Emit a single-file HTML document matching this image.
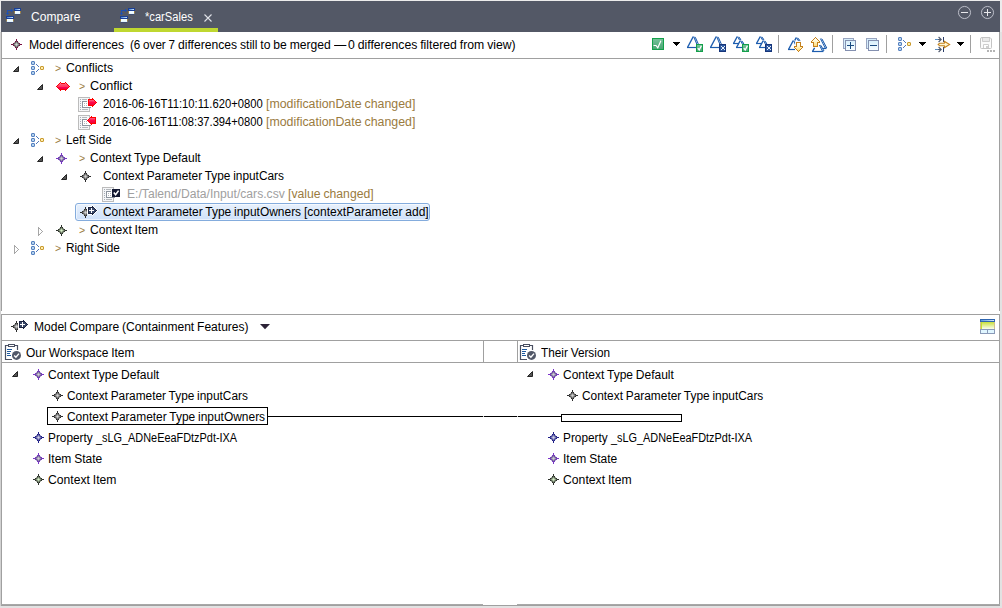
<!DOCTYPE html>
<html><head><meta charset="utf-8">
<style>
*{box-sizing:border-box;margin:0;padding:0}
html,body{width:1002px;height:608px;overflow:hidden;background:#fff}
body{font-family:"Liberation Sans",sans-serif;font-size:12px;color:#000;position:relative}
.a{position:absolute}
.t{position:absolute;white-space:nowrap;line-height:14px;height:14px;font-size:12px;transform-origin:0 0;word-spacing:-0.5px}
svg{position:absolute;overflow:visible}
</style></head><body>
<!-- outer light edge -->
<div class="a" style="left:0;top:0;width:1002px;height:608px;background:#ececec"></div>
<div class="a" style="left:0;top:32px;width:1px;height:576px;background:#d2d2d2"></div>
<div class="a" style="left:1px;top:1px;width:999px;height:605px;background:#fff"></div>
<div class="a" style="left:1000px;top:32px;width:2px;height:576px;background:#e2e2e2"></div>
<div class="a" style="left:0;top:606px;width:1002px;height:2px;background:#e2e2e2"></div>
<!-- tab bar -->
<div class="a" style="left:1px;top:1px;width:999px;height:31px;background:#535866"></div>
<div class="a" style="left:114px;top:28px;width:104px;height:4px;background:#bfd730"></div>
<!-- upper pane border -->
<div class="a" style="left:1px;top:32px;width:1px;height:279px;background:#a0a0a0"></div>
<div class="a" style="left:999px;top:32px;width:1px;height:279px;background:#a0a0a0"></div>
<div class="a" style="left:1px;top:58px;width:999px;height:1px;background:#a0a0a0"></div>
<!-- lower pane border -->
<div class="a" style="left:1px;top:314px;width:1px;height:292px;background:#a0a0a0"></div>
<div class="a" style="left:999px;top:314px;width:1px;height:292px;background:#a0a0a0"></div>
<div class="a" style="left:1px;top:314px;width:999px;height:1px;background:#a0a0a0"></div>
<div class="a" style="left:1px;top:340px;width:999px;height:1px;background:#a0a0a0"></div>
<div class="a" style="left:1px;top:362px;width:999px;height:1px;background:#a0a0a0"></div>
<div class="a" style="left:1px;top:604px;width:999px;height:1px;background:#a8a8a8"></div>
<div class="a" style="left:483px;top:604px;width:34px;height:1px;background:#fff"></div>
<div class="a" style="left:1px;top:605px;width:999px;height:1px;background:#a0a0a0"></div>
<div class="a" style="left:483px;top:340px;width:1px;height:23px;background:#a0a0a0"></div>
<div class="a" style="left:517px;top:340px;width:1px;height:23px;background:#a0a0a0"></div>
<!-- selection -->
<div class="a" style="left:75px;top:203px;width:355px;height:18px;border:1px solid #84acdd;border-radius:3px;background:linear-gradient(#e8f1fc,#cfe1fa);box-shadow:inset 0 0 0 1px rgba(255,255,255,.55)"></div>
<!-- diff boxes + connector -->
<div class="a" style="left:47px;top:407px;width:221px;height:18px;border:1px solid #000"></div>
<div class="a" style="left:268px;top:416px;width:293px;height:1px;background:#000"></div>
<div class="a" style="left:483px;top:416px;width:1px;height:1px;background:#d0d0d0"></div>
<div class="a" style="left:517px;top:416px;width:1px;height:1px;background:#d0d0d0"></div>
<div class="a" style="left:561px;top:414px;width:121px;height:8px;border:1px solid #000"></div>
<div class="t" id="tab1" style="left:31.00px;top:10.2px;color:#fff;transform:scaleX(1.0035)">Compare</div>
<div class="t" id="tab2" style="left:144.86px;top:10.4px;color:#fff;transform:scaleX(0.9290)">*carSales</div>
<div class="t" id="ta" style="left:28.64px;top:38.2px;color:#000;transform:scaleX(1.0124)">Model differences</div>
<div class="t" id="tb1" style="left:130.02px;top:38.2px;color:#000;transform:scaleX(0.9694)">(6 over 7</div>
<div class="t" id="tb2" style="left:178.29px;top:38.2px;color:#000;transform:scaleX(1.0109)">differences still to be merged</div>
<div class="t" id="tb3" style="left:333.70px;top:38.2px;color:#000;transform:scaleX(1.0250)">—</div>
<div class="t" id="tb4" style="left:348.24px;top:38.2px;color:#000;transform:scaleX(1.0192)">0 differences filtered from view)</div>
<div class="t" id="r1a" style="left:55.33px;top:61.9px;color:#9a7b3e;font-size:10px;transform:scaleX(1.0505)">&gt;</div>
<div class="t" id="r1b" style="left:65.99px;top:61px;color:#000;transform:scaleX(1.0219)">Conflicts</div>
<div class="t" id="r2a" style="left:79.33px;top:79.9px;color:#9a7b3e;font-size:10px;transform:scaleX(1.0505)">&gt;</div>
<div class="t" id="r2b" style="left:89.67px;top:79px;color:#000;transform:scaleX(1.0552)">Conflict</div>
<div class="t" id="r3a" style="left:102.64px;top:97px;color:#000;transform:scaleX(0.9353)">2016-06-16T11:10:11.620+0800</div>
<div class="t" id="r3b" style="left:265.82px;top:97px;color:#9a7b3e;transform:scaleX(1.0304)">[modificationDate changed]</div>
<div class="t" id="r4a" style="left:102.64px;top:115px;color:#000;transform:scaleX(0.9304)">2016-06-16T11:08:37.394+0800</div>
<div class="t" id="r4b" style="left:265.82px;top:115px;color:#9a7b3e;transform:scaleX(1.0304)">[modificationDate changed]</div>
<div class="t" id="r5a" style="left:55.33px;top:133.9px;color:#9a7b3e;font-size:10px;transform:scaleX(1.0505)">&gt;</div>
<div class="t" id="r5b" style="left:65.57px;top:133px;color:#000;transform:scaleX(0.9759)">Left Side</div>
<div class="t" id="r6a" style="left:79.33px;top:151.9px;color:#9a7b3e;font-size:10px;transform:scaleX(1.0505)">&gt;</div>
<div class="t" id="r6b" style="left:89.80px;top:151px;color:#000;transform:scaleX(0.9984)">Context Type Default</div>
<div class="t" id="r7" style="left:102.81px;top:169px;color:#000;transform:scaleX(0.9887)">Context Parameter Type inputCars</div>
<div class="t" id="r8a" style="left:126.64px;top:187px;color:#a0a0a0;transform:scaleX(1.0108)">E:/Talend/Data/Input/cars.csv</div>
<div class="t" id="r8b" style="left:287.64px;top:187px;color:#9a7b3e;transform:scaleX(1.0164)">[value changed]</div>
<div class="t" id="r9a" style="left:102.80px;top:205px;color:#000;transform:scaleX(0.9952)">Context Parameter Type inputOwners</div>
<div class="t" id="r9b" style="left:303.65px;top:205px;color:#000;transform:scaleX(1.0037)">[contextParameter add]</div>
<div class="t" id="r10a" style="left:79.33px;top:223.9px;color:#9a7b3e;font-size:10px;transform:scaleX(1.0505)">&gt;</div>
<div class="t" id="r10b" style="left:89.79px;top:223px;color:#000;transform:scaleX(1.0093)">Context Item</div>
<div class="t" id="r11a" style="left:55.33px;top:241.9px;color:#9a7b3e;font-size:10px;transform:scaleX(1.0505)">&gt;</div>
<div class="t" id="r11b" style="left:65.57px;top:241px;color:#000;transform:scaleX(0.9814)">Right Side</div>
<div class="t" id="mc" style="left:33.65px;top:320px;color:#000;transform:scaleX(1.0029)">Model Compare (Containment Features)</div>
<div class="t" id="ow" style="left:25.85px;top:345.7px;color:#000;transform:scaleX(0.9971)">Our Workspace Item</div>
<div class="t" id="tv" style="left:541.45px;top:345.7px;color:#000;transform:scaleX(0.9830)">Their Version</div>
<div class="t" id="l1" style="left:47.70px;top:368px;color:#000;transform:scaleX(1.0029)">Context Type Default</div>
<div class="t" id="l2" style="left:67.11px;top:389px;color:#000;transform:scaleX(0.9882)">Context Parameter Type inputCars</div>
<div class="t" id="l3" style="left:67.10px;top:410px;color:#000;transform:scaleX(0.9952)">Context Parameter Type inputOwners</div>
<div class="t" id="l4a" style="left:47.77px;top:431px;color:#000;transform:scaleX(0.9842)">Property</div>
<div class="t" id="l4b" style="left:96.28px;top:431px;color:#000;transform:scaleX(0.9081)">_sLG_ADNeEeaFDtzPdt-IXA</div>
<div class="t" id="l5" style="left:47.50px;top:452px;color:#000;transform:scaleX(1.0006)">Item State</div>
<div class="t" id="l6" style="left:47.69px;top:473px;color:#000;transform:scaleX(1.0139)">Context Item</div>
<div class="t" id="q1" style="left:562.70px;top:368px;color:#000;transform:scaleX(1.0002)">Context Type Default</div>
<div class="t" id="q2" style="left:581.71px;top:389px;color:#000;transform:scaleX(0.9904)">Context Parameter Type inputCars</div>
<div class="t" id="q4a" style="left:562.77px;top:431px;color:#000;transform:scaleX(0.9842)">Property</div>
<div class="t" id="q4b" style="left:611.28px;top:431px;color:#000;transform:scaleX(0.9081)">_sLG_ADNeEeaFDtzPdt-IXA</div>
<div class="t" id="q5" style="left:562.50px;top:452px;color:#000;transform:scaleX(1.0006)">Item State</div>
<div class="t" id="q6" style="left:562.69px;top:473px;color:#000;transform:scaleX(1.0169)">Context Item</div>
<svg width="1002" height="608" style="left:0;top:0" shape-rendering="crispEdges"><defs><linearGradient id="g1" x1="0" y1="0" x2="0" y2="1"><stop offset="0" stop-color="#5b9be0"/><stop offset="1" stop-color="#5b9be0"/></linearGradient><linearGradient id="g2"><stop offset="0" stop-color="#3f7fd8"/><stop offset="1" stop-color="#cfe6fa"/></linearGradient><linearGradient id="g3" x1="0" y1="0" x2="0" y2="1"><stop offset="0" stop-color="#5b9be0"/><stop offset="1" stop-color="#5b9be0"/></linearGradient><linearGradient id="g4"><stop offset="0" stop-color="#3f7fd8"/><stop offset="1" stop-color="#cfe6fa"/></linearGradient><linearGradient id="g5" x1="0" y1="0" x2="0" y2="1"><stop offset="0" stop-color="#5b9be0"/><stop offset="1" stop-color="#5b9be0"/></linearGradient><linearGradient id="g6"><stop offset="0" stop-color="#3f7fd8"/><stop offset="1" stop-color="#cfe6fa"/></linearGradient><linearGradient id="g7" x1="0" y1="0" x2="0" y2="1"><stop offset="0" stop-color="#5b9be0"/><stop offset="1" stop-color="#5b9be0"/></linearGradient><linearGradient id="g8"><stop offset="0" stop-color="#3f7fd8"/><stop offset="1" stop-color="#cfe6fa"/></linearGradient><linearGradient id="g9" x1="0" y1="0" x2="0" y2="1"><stop offset="0" stop-color="#ff90a0"/><stop offset="0.5" stop-color="#ff0848"/><stop offset="1" stop-color="#e00030"/></linearGradient><linearGradient id="g10" x1="0" y1="0" x2="0" y2="1"><stop offset="0" stop-color="#ff90a0"/><stop offset="0.5" stop-color="#ff0848"/><stop offset="1" stop-color="#e00030"/></linearGradient><linearGradient id="g11"><stop offset="0" stop-color="#5a98dc"/><stop offset="1" stop-color="#d8e8f8"/></linearGradient><linearGradient id="g12" x1="0" y1="0" x2="0" y2="1"><stop offset="0" stop-color="#c8e03c"/><stop offset="1" stop-color="#fbfdf0"/></linearGradient><linearGradient id="g13" x1="0" y1="0" x2="0" y2="1"><stop offset="0" stop-color="#74c098"/><stop offset="1" stop-color="#4aa674"/></linearGradient><linearGradient id="g14" x1="0" y1="0" x2="0" y2="1"><stop offset="0" stop-color="#74c098"/><stop offset="1" stop-color="#4aa674"/></linearGradient><linearGradient id="g15" x1="0" y1="0" x2="0" y2="1"><stop offset="0" stop-color="#74c098"/><stop offset="1" stop-color="#4aa674"/></linearGradient><linearGradient id="g16" x1="0" y1="0" x2="0" y2="1"><stop offset="0" stop-color="#d8f0fc"/><stop offset="1" stop-color="#f8fcff"/></linearGradient><linearGradient id="g17" x1="0" y1="0" x2="0" y2="1"><stop offset="0" stop-color="#d8f0fc"/><stop offset="1" stop-color="#f8fcff"/></linearGradient></defs>
<rect x="14" y="8" width="7" height="3" fill="#1c3f94"/>
<rect x="15" y="9" width="5" height="1" fill="url(#g1)"/>
<rect x="15" y="9" width="5" height="1" fill="url(#g2)"/>
<rect x="14" y="11" width="7" height="3" fill="#b08a3a" opacity="0.8"/>
<rect x="15" y="11" width="5" height="3" fill="#f0fcff"/>
<rect x="14" y="13" width="7" height="1" fill="#6a7a9a" opacity="0.6"/>
<rect x="15" y="13" width="5" height="1" fill="#e6f6ff"/>
<rect x="15" y="14" width="5" height="1" fill="#3a4a78" opacity="0.7"/>
<rect x="6" y="16" width="8" height="3" fill="#1c3f94"/>
<rect x="7" y="17" width="6" height="1" fill="url(#g3)"/>
<rect x="7" y="17" width="6" height="1" fill="url(#g4)"/>
<rect x="6" y="19" width="8" height="3" fill="#b08a3a" opacity="0.8"/>
<rect x="7" y="19" width="6" height="3" fill="#f0fcff"/>
<rect x="6" y="21" width="8" height="1" fill="#6a7a9a" opacity="0.6"/>
<rect x="7" y="21" width="6" height="1" fill="#e6f6ff"/>
<rect x="7" y="22" width="6" height="1" fill="#3a4a78" opacity="0.7"/>
<rect x="7" y="10" width="5" height="1" fill="#2050b0"/>
<rect x="7" y="10" width="1" height="4" fill="#2050b0"/>
<rect x="11" y="9" width="1" height="3" fill="#2050b0"/>
<rect x="12" y="10" width="1" height="1" fill="#2050b0"/>
<rect x="6" y="13" width="3" height="1" fill="#2050b0"/>
<rect x="7" y="14" width="1" height="1" fill="#2050b0"/>
<rect x="128" y="8" width="7" height="3" fill="#1c3f94"/>
<rect x="129" y="9" width="5" height="1" fill="url(#g5)"/>
<rect x="129" y="9" width="5" height="1" fill="url(#g6)"/>
<rect x="128" y="11" width="7" height="3" fill="#b08a3a" opacity="0.8"/>
<rect x="129" y="11" width="5" height="3" fill="#f0fcff"/>
<rect x="128" y="13" width="7" height="1" fill="#6a7a9a" opacity="0.6"/>
<rect x="129" y="13" width="5" height="1" fill="#e6f6ff"/>
<rect x="129" y="14" width="5" height="1" fill="#3a4a78" opacity="0.7"/>
<rect x="120" y="16" width="8" height="3" fill="#1c3f94"/>
<rect x="121" y="17" width="6" height="1" fill="url(#g7)"/>
<rect x="121" y="17" width="6" height="1" fill="url(#g8)"/>
<rect x="120" y="19" width="8" height="3" fill="#b08a3a" opacity="0.8"/>
<rect x="121" y="19" width="6" height="3" fill="#f0fcff"/>
<rect x="120" y="21" width="8" height="1" fill="#6a7a9a" opacity="0.6"/>
<rect x="121" y="21" width="6" height="1" fill="#e6f6ff"/>
<rect x="121" y="22" width="6" height="1" fill="#3a4a78" opacity="0.7"/>
<rect x="121" y="10" width="5" height="1" fill="#2050b0"/>
<rect x="121" y="10" width="1" height="4" fill="#2050b0"/>
<rect x="125" y="9" width="1" height="3" fill="#2050b0"/>
<rect x="126" y="10" width="1" height="1" fill="#2050b0"/>
<rect x="120" y="13" width="3" height="1" fill="#2050b0"/>
<rect x="121" y="14" width="1" height="1" fill="#2050b0"/>
<path shape-rendering="geometricPrecision" d="M204.5 14.5 L211.5 21.5 M211.5 14.5 L204.5 21.5" stroke="#e0e2e8" stroke-width="1.1" fill="none"/>
<circle shape-rendering="geometricPrecision" cx="964.5" cy="12.5" r="6.05" fill="none" stroke="#c0c2cc" stroke-width="0.95"/><rect x="961" y="12" width="7" height="1.3" fill="#e8e8ec"/>
<circle shape-rendering="geometricPrecision" cx="987.5" cy="12.5" r="6.05" fill="none" stroke="#c0c2cc" stroke-width="0.95"/><rect x="984" y="12" width="7" height="1.3" fill="#e8e8ec"/><rect x="987" y="9" width="1.3" height="7" fill="#e8e8ec"/>
<rect x="16" y="39" width="1" height="1" fill="#780c40"/>
<rect x="16" y="40" width="1" height="1" fill="#780c40"/>
<rect x="15" y="41" width="1" height="1" fill="#780c40"/>
<rect x="16" y="41" width="1" height="1" fill="#5c5c5c"/>
<rect x="17" y="41" width="1" height="1" fill="#780c40"/>
<rect x="14" y="42" width="1" height="1" fill="#c090a8"/>
<rect x="15" y="42" width="1" height="1" fill="#5c5c5c"/>
<rect x="16" y="42" width="1" height="1" fill="#909090"/>
<rect x="17" y="42" width="1" height="1" fill="#5c5c5c"/>
<rect x="18" y="42" width="1" height="1" fill="#c090a8"/>
<rect x="13" y="43" width="1" height="1" fill="#780c40"/>
<rect x="14" y="43" width="1" height="1" fill="#5c5c5c"/>
<rect x="15" y="43" width="1" height="1" fill="#909090"/>
<rect x="16" y="43" width="1" height="1" fill="#bcbcbc"/>
<rect x="17" y="43" width="1" height="1" fill="#909090"/>
<rect x="18" y="43" width="1" height="1" fill="#5c5c5c"/>
<rect x="19" y="43" width="1" height="1" fill="#780c40"/>
<rect x="11" y="44" width="2" height="1" fill="#780c40"/>
<rect x="13" y="44" width="1" height="1" fill="#5c5c5c"/>
<rect x="14" y="44" width="1" height="1" fill="#909090"/>
<rect x="15" y="44" width="1" height="1" fill="#bcbcbc"/>
<rect x="16" y="44" width="1" height="1" fill="#dadada"/>
<rect x="17" y="44" width="1" height="1" fill="#bcbcbc"/>
<rect x="18" y="44" width="1" height="1" fill="#909090"/>
<rect x="19" y="44" width="1" height="1" fill="#5c5c5c"/>
<rect x="20" y="44" width="2" height="1" fill="#780c40"/>
<rect x="13" y="45" width="1" height="1" fill="#780c40"/>
<rect x="14" y="45" width="1" height="1" fill="#5c5c5c"/>
<rect x="15" y="45" width="1" height="1" fill="#909090"/>
<rect x="16" y="45" width="1" height="1" fill="#bcbcbc"/>
<rect x="17" y="45" width="1" height="1" fill="#909090"/>
<rect x="18" y="45" width="1" height="1" fill="#5c5c5c"/>
<rect x="19" y="45" width="1" height="1" fill="#780c40"/>
<rect x="14" y="46" width="1" height="1" fill="#c090a8"/>
<rect x="15" y="46" width="1" height="1" fill="#5c5c5c"/>
<rect x="16" y="46" width="1" height="1" fill="#909090"/>
<rect x="17" y="46" width="1" height="1" fill="#5c5c5c"/>
<rect x="18" y="46" width="1" height="1" fill="#c090a8"/>
<rect x="15" y="47" width="1" height="1" fill="#780c40"/>
<rect x="16" y="47" width="1" height="1" fill="#5c5c5c"/>
<rect x="17" y="47" width="1" height="1" fill="#780c40"/>
<rect x="16" y="48" width="1" height="1" fill="#780c40"/>
<rect x="16" y="49" width="1" height="1" fill="#780c40"/>
<polygon shape-rendering="geometricPrecision" points="18.5,66.5 18.5,71.5 13.5,71.5" fill="#565656" stroke="#242424" stroke-width="1"/>
<rect shape-rendering="geometricPrecision" x="31.5" y="61.5" width="3" height="3" rx="0.5" fill="#b4d2ec" stroke="#5580c0" stroke-width="1"/>
<rect shape-rendering="geometricPrecision" x="31.5" y="66.5" width="3" height="3" rx="0.5" fill="#b4d2ec" stroke="#5580c0" stroke-width="1"/>
<rect shape-rendering="geometricPrecision" x="31.5" y="71.5" width="3" height="3" rx="0.5" fill="#b4d2ec" stroke="#5580c0" stroke-width="1"/>
<rect shape-rendering="geometricPrecision" x="40.5" y="66.5" width="3" height="3" rx="0.5" fill="#ffeeb0" stroke="#c99a2e" stroke-width="1"/>
<rect x="36" y="64" width="1" height="1" fill="#4f76b8"/>
<rect x="37" y="65" width="1" height="1" fill="#4f76b8"/>
<rect x="38" y="66" width="1" height="1" fill="#4f76b8"/>
<rect x="38" y="69" width="1" height="1" fill="#4f76b8"/>
<rect x="37" y="70" width="1" height="1" fill="#4f76b8"/>
<rect x="36" y="71" width="1" height="1" fill="#4f76b8"/>
<polygon shape-rendering="geometricPrecision" points="42.5,84.5 42.5,89.5 37.5,89.5" fill="#565656" stroke="#242424" stroke-width="1"/>
<rect x="60" y="82" width="1" height="1" fill="#f80008"/>
<rect x="65" y="82" width="1" height="1" fill="#f80008"/>
<rect x="59" y="83" width="1" height="1" fill="#f80008"/>
<rect x="60" y="83" width="1" height="1" fill="#ff7088"/>
<rect x="61" y="83" width="4" height="1" fill="#f80008"/>
<rect x="65" y="83" width="1" height="1" fill="#ff7088"/>
<rect x="66" y="83" width="1" height="1" fill="#f80008"/>
<rect x="58" y="84" width="1" height="1" fill="#f80008"/>
<rect x="59" y="84" width="8" height="1" fill="#ff5672"/>
<rect x="67" y="84" width="1" height="1" fill="#f80008"/>
<rect x="57" y="85" width="1" height="1" fill="#f80008"/>
<rect x="58" y="85" width="10" height="1" fill="#ff4466"/>
<rect x="68" y="85" width="1" height="1" fill="#f80008"/>
<rect x="56" y="86" width="1" height="1" fill="#f80008"/>
<rect x="57" y="86" width="12" height="1" fill="#ff3a60"/>
<rect x="69" y="86" width="1" height="1" fill="#f80008"/>
<rect x="57" y="87" width="1" height="1" fill="#f80008"/>
<rect x="58" y="87" width="10" height="1" fill="#ff0050"/>
<rect x="68" y="87" width="1" height="1" fill="#f80008"/>
<rect x="58" y="88" width="1" height="1" fill="#f80008"/>
<rect x="59" y="88" width="8" height="1" fill="#f40044"/>
<rect x="67" y="88" width="1" height="1" fill="#f80008"/>
<rect x="59" y="89" width="8" height="1" fill="#f80008"/>
<rect x="60" y="90" width="1" height="1" fill="#f80008"/>
<rect x="65" y="90" width="1" height="1" fill="#f80008"/>
<rect x="78" y="97" width="12" height="15" fill="#bcbcbc"/>
<rect x="79" y="98" width="10" height="13" fill="#f5f6f8"/>
<rect x="80" y="99" width="1" height="1" fill="#a6acb4"/>
<rect x="80" y="101" width="1" height="1" fill="#a6acb4"/>
<rect x="80" y="103" width="1" height="1" fill="#a6acb4"/>
<rect x="80" y="105" width="1" height="1" fill="#a6acb4"/>
<rect x="80" y="107" width="1" height="1" fill="#a6acb4"/>
<rect x="80" y="109" width="1" height="1" fill="#a6acb4"/>
<rect x="82" y="99" width="5" height="1" fill="#b4b8bc"/>
<rect x="82" y="109" width="6" height="1" fill="#b4b8bc"/>
<rect x="82" y="101" width="5" height="1" fill="#8c949e"/>
<rect x="82" y="101" width="1" height="7" fill="#8c949e"/>
<rect x="82" y="107" width="9" height="1" fill="#8c949e"/>
<rect x="83" y="102" width="7" height="5" fill="#fff"/>
<rect x="84" y="103" width="1" height="1" fill="#b0b4ba"/>
<rect x="84" y="105" width="1" height="1" fill="#b0b4ba"/>
<rect x="86" y="103" width="1" height="1" fill="#b0b4ba"/>
<rect x="86" y="105" width="1" height="1" fill="#b0b4ba"/>
<polygon points="88.5,99.5 92.5,99.5 92.5,98.5 96.5,102.5 92.5,106.5 92.5,105.5 88.5,105.5" fill="url(#g9)" stroke="#ff0000" stroke-width="1"/>
<rect x="78" y="115" width="12" height="15" fill="#bcbcbc"/>
<rect x="79" y="116" width="10" height="13" fill="#f5f6f8"/>
<rect x="80" y="117" width="1" height="1" fill="#a6acb4"/>
<rect x="80" y="119" width="1" height="1" fill="#a6acb4"/>
<rect x="80" y="121" width="1" height="1" fill="#a6acb4"/>
<rect x="80" y="123" width="1" height="1" fill="#a6acb4"/>
<rect x="80" y="125" width="1" height="1" fill="#a6acb4"/>
<rect x="80" y="127" width="1" height="1" fill="#a6acb4"/>
<rect x="82" y="117" width="5" height="1" fill="#b4b8bc"/>
<rect x="82" y="127" width="6" height="1" fill="#b4b8bc"/>
<rect x="82" y="119" width="5" height="1" fill="#8c949e"/>
<rect x="82" y="119" width="1" height="7" fill="#8c949e"/>
<rect x="82" y="125" width="9" height="1" fill="#8c949e"/>
<rect x="83" y="120" width="7" height="5" fill="#fff"/>
<rect x="84" y="121" width="1" height="1" fill="#b0b4ba"/>
<rect x="84" y="123" width="1" height="1" fill="#b0b4ba"/>
<rect x="86" y="121" width="1" height="1" fill="#b0b4ba"/>
<rect x="86" y="123" width="1" height="1" fill="#b0b4ba"/>
<polygon points="95.5,117.5 91.5,117.5 91.5,116.5 87.5,120.5 91.5,124.5 91.5,123.5 95.5,123.5" fill="url(#g10)" stroke="#ff0000" stroke-width="1"/>
<polygon shape-rendering="geometricPrecision" points="18.5,138.5 18.5,143.5 13.5,143.5" fill="#565656" stroke="#242424" stroke-width="1"/>
<rect shape-rendering="geometricPrecision" x="31.5" y="133.5" width="3" height="3" rx="0.5" fill="#b4d2ec" stroke="#5580c0" stroke-width="1"/>
<rect shape-rendering="geometricPrecision" x="31.5" y="138.5" width="3" height="3" rx="0.5" fill="#b4d2ec" stroke="#5580c0" stroke-width="1"/>
<rect shape-rendering="geometricPrecision" x="31.5" y="143.5" width="3" height="3" rx="0.5" fill="#b4d2ec" stroke="#5580c0" stroke-width="1"/>
<rect shape-rendering="geometricPrecision" x="40.5" y="138.5" width="3" height="3" rx="0.5" fill="#ffeeb0" stroke="#c99a2e" stroke-width="1"/>
<rect x="36" y="136" width="1" height="1" fill="#4f76b8"/>
<rect x="37" y="137" width="1" height="1" fill="#4f76b8"/>
<rect x="38" y="138" width="1" height="1" fill="#4f76b8"/>
<rect x="38" y="141" width="1" height="1" fill="#4f76b8"/>
<rect x="37" y="142" width="1" height="1" fill="#4f76b8"/>
<rect x="36" y="143" width="1" height="1" fill="#4f76b8"/>
<polygon shape-rendering="geometricPrecision" points="42.5,156.5 42.5,161.5 37.5,161.5" fill="#565656" stroke="#242424" stroke-width="1"/>
<rect x="61" y="153" width="1" height="1" fill="#7a30cc"/>
<rect x="61" y="154" width="1" height="1" fill="#7a30cc"/>
<rect x="60" y="155" width="1" height="1" fill="#7a30cc"/>
<rect x="61" y="155" width="1" height="1" fill="#6c5898"/>
<rect x="62" y="155" width="1" height="1" fill="#7a30cc"/>
<rect x="59" y="156" width="1" height="1" fill="#b8a0dc"/>
<rect x="60" y="156" width="1" height="1" fill="#6c5898"/>
<rect x="61" y="156" width="1" height="1" fill="#9488ac"/>
<rect x="62" y="156" width="1" height="1" fill="#6c5898"/>
<rect x="63" y="156" width="1" height="1" fill="#b8a0dc"/>
<rect x="58" y="157" width="1" height="1" fill="#7a30cc"/>
<rect x="59" y="157" width="1" height="1" fill="#6c5898"/>
<rect x="60" y="157" width="1" height="1" fill="#9488ac"/>
<rect x="61" y="157" width="1" height="1" fill="#b8b4c4"/>
<rect x="62" y="157" width="1" height="1" fill="#9488ac"/>
<rect x="63" y="157" width="1" height="1" fill="#6c5898"/>
<rect x="64" y="157" width="1" height="1" fill="#7a30cc"/>
<rect x="56" y="158" width="2" height="1" fill="#7a30cc"/>
<rect x="58" y="158" width="1" height="1" fill="#6c5898"/>
<rect x="59" y="158" width="1" height="1" fill="#9488ac"/>
<rect x="60" y="158" width="1" height="1" fill="#b8b4c4"/>
<rect x="61" y="158" width="1" height="1" fill="#d2d2d6"/>
<rect x="62" y="158" width="1" height="1" fill="#b8b4c4"/>
<rect x="63" y="158" width="1" height="1" fill="#9488ac"/>
<rect x="64" y="158" width="1" height="1" fill="#6c5898"/>
<rect x="65" y="158" width="2" height="1" fill="#7a30cc"/>
<rect x="58" y="159" width="1" height="1" fill="#7a30cc"/>
<rect x="59" y="159" width="1" height="1" fill="#6c5898"/>
<rect x="60" y="159" width="1" height="1" fill="#9488ac"/>
<rect x="61" y="159" width="1" height="1" fill="#b8b4c4"/>
<rect x="62" y="159" width="1" height="1" fill="#9488ac"/>
<rect x="63" y="159" width="1" height="1" fill="#6c5898"/>
<rect x="64" y="159" width="1" height="1" fill="#7a30cc"/>
<rect x="59" y="160" width="1" height="1" fill="#b8a0dc"/>
<rect x="60" y="160" width="1" height="1" fill="#6c5898"/>
<rect x="61" y="160" width="1" height="1" fill="#9488ac"/>
<rect x="62" y="160" width="1" height="1" fill="#6c5898"/>
<rect x="63" y="160" width="1" height="1" fill="#b8a0dc"/>
<rect x="60" y="161" width="1" height="1" fill="#7a30cc"/>
<rect x="61" y="161" width="1" height="1" fill="#6c5898"/>
<rect x="62" y="161" width="1" height="1" fill="#7a30cc"/>
<rect x="61" y="162" width="1" height="1" fill="#7a30cc"/>
<rect x="61" y="163" width="1" height="1" fill="#7a30cc"/>
<polygon shape-rendering="geometricPrecision" points="66.5,174.5 66.5,179.5 61.5,179.5" fill="#565656" stroke="#242424" stroke-width="1"/>
<rect x="85" y="171" width="1" height="1" fill="#2c2c2c"/>
<rect x="85" y="172" width="1" height="1" fill="#2c2c2c"/>
<rect x="84" y="173" width="1" height="1" fill="#2c2c2c"/>
<rect x="85" y="173" width="1" height="1" fill="#5a5a5a"/>
<rect x="86" y="173" width="1" height="1" fill="#2c2c2c"/>
<rect x="83" y="174" width="1" height="1" fill="#a8a8a8"/>
<rect x="84" y="174" width="1" height="1" fill="#5a5a5a"/>
<rect x="85" y="174" width="1" height="1" fill="#8c8c8c"/>
<rect x="86" y="174" width="1" height="1" fill="#5a5a5a"/>
<rect x="87" y="174" width="1" height="1" fill="#a8a8a8"/>
<rect x="82" y="175" width="1" height="1" fill="#2c2c2c"/>
<rect x="83" y="175" width="1" height="1" fill="#5a5a5a"/>
<rect x="84" y="175" width="1" height="1" fill="#8c8c8c"/>
<rect x="85" y="175" width="1" height="1" fill="#b8b8b8"/>
<rect x="86" y="175" width="1" height="1" fill="#8c8c8c"/>
<rect x="87" y="175" width="1" height="1" fill="#5a5a5a"/>
<rect x="88" y="175" width="1" height="1" fill="#2c2c2c"/>
<rect x="80" y="176" width="2" height="1" fill="#2c2c2c"/>
<rect x="82" y="176" width="1" height="1" fill="#5a5a5a"/>
<rect x="83" y="176" width="1" height="1" fill="#8c8c8c"/>
<rect x="84" y="176" width="1" height="1" fill="#b8b8b8"/>
<rect x="85" y="176" width="1" height="1" fill="#d2d2d2"/>
<rect x="86" y="176" width="1" height="1" fill="#b8b8b8"/>
<rect x="87" y="176" width="1" height="1" fill="#8c8c8c"/>
<rect x="88" y="176" width="1" height="1" fill="#5a5a5a"/>
<rect x="89" y="176" width="2" height="1" fill="#2c2c2c"/>
<rect x="82" y="177" width="1" height="1" fill="#2c2c2c"/>
<rect x="83" y="177" width="1" height="1" fill="#5a5a5a"/>
<rect x="84" y="177" width="1" height="1" fill="#8c8c8c"/>
<rect x="85" y="177" width="1" height="1" fill="#b8b8b8"/>
<rect x="86" y="177" width="1" height="1" fill="#8c8c8c"/>
<rect x="87" y="177" width="1" height="1" fill="#5a5a5a"/>
<rect x="88" y="177" width="1" height="1" fill="#2c2c2c"/>
<rect x="83" y="178" width="1" height="1" fill="#a8a8a8"/>
<rect x="84" y="178" width="1" height="1" fill="#5a5a5a"/>
<rect x="85" y="178" width="1" height="1" fill="#8c8c8c"/>
<rect x="86" y="178" width="1" height="1" fill="#5a5a5a"/>
<rect x="87" y="178" width="1" height="1" fill="#a8a8a8"/>
<rect x="84" y="179" width="1" height="1" fill="#2c2c2c"/>
<rect x="85" y="179" width="1" height="1" fill="#5a5a5a"/>
<rect x="86" y="179" width="1" height="1" fill="#2c2c2c"/>
<rect x="85" y="180" width="1" height="1" fill="#2c2c2c"/>
<rect x="85" y="181" width="1" height="1" fill="#2c2c2c"/>
<rect x="102" y="187" width="12" height="15" fill="#bcbcbc"/>
<rect x="103" y="188" width="10" height="13" fill="#f5f6f8"/>
<rect x="104" y="189" width="1" height="1" fill="#a6acb4"/>
<rect x="104" y="191" width="1" height="1" fill="#a6acb4"/>
<rect x="104" y="193" width="1" height="1" fill="#a6acb4"/>
<rect x="104" y="195" width="1" height="1" fill="#a6acb4"/>
<rect x="104" y="197" width="1" height="1" fill="#a6acb4"/>
<rect x="104" y="199" width="1" height="1" fill="#a6acb4"/>
<rect x="106" y="189" width="5" height="1" fill="#b4b8bc"/>
<rect x="106" y="199" width="6" height="1" fill="#b4b8bc"/>
<rect x="106" y="191" width="5" height="1" fill="#8c949e"/>
<rect x="106" y="191" width="1" height="7" fill="#8c949e"/>
<rect x="106" y="197" width="9" height="1" fill="#8c949e"/>
<rect x="107" y="192" width="7" height="5" fill="#fff"/>
<rect x="108" y="193" width="1" height="1" fill="#b0b4ba"/>
<rect x="108" y="195" width="1" height="1" fill="#b0b4ba"/>
<rect x="110" y="193" width="1" height="1" fill="#b0b4ba"/>
<rect x="110" y="195" width="1" height="1" fill="#b0b4ba"/>
<rect x="112" y="189" width="8" height="8" fill="#141a33"/>
<path shape-rendering="geometricPrecision" d="M113.8 192.6 L115.6 194.8 L118.6 190.6" stroke="#fff" stroke-width="1.6" fill="none"/>
<rect x="85" y="207" width="1" height="1" fill="#2c2c2c"/>
<rect x="85" y="208" width="1" height="1" fill="#2c2c2c"/>
<rect x="84" y="209" width="1" height="1" fill="#2c2c2c"/>
<rect x="85" y="209" width="1" height="1" fill="#5a5a5a"/>
<rect x="86" y="209" width="1" height="1" fill="#2c2c2c"/>
<rect x="83" y="210" width="1" height="1" fill="#a8a8a8"/>
<rect x="84" y="210" width="1" height="1" fill="#5a5a5a"/>
<rect x="85" y="210" width="1" height="1" fill="#8c8c8c"/>
<rect x="86" y="210" width="1" height="1" fill="#5a5a5a"/>
<rect x="82" y="211" width="1" height="1" fill="#2c2c2c"/>
<rect x="83" y="211" width="1" height="1" fill="#5a5a5a"/>
<rect x="84" y="211" width="1" height="1" fill="#8c8c8c"/>
<rect x="85" y="211" width="1" height="1" fill="#b8b8b8"/>
<rect x="86" y="211" width="1" height="1" fill="#8c8c8c"/>
<rect x="80" y="212" width="2" height="1" fill="#2c2c2c"/>
<rect x="82" y="212" width="1" height="1" fill="#5a5a5a"/>
<rect x="83" y="212" width="1" height="1" fill="#8c8c8c"/>
<rect x="84" y="212" width="1" height="1" fill="#b8b8b8"/>
<rect x="85" y="212" width="1" height="1" fill="#d2d2d2"/>
<rect x="86" y="212" width="1" height="1" fill="#b8b8b8"/>
<rect x="82" y="213" width="1" height="1" fill="#2c2c2c"/>
<rect x="83" y="213" width="1" height="1" fill="#5a5a5a"/>
<rect x="84" y="213" width="1" height="1" fill="#8c8c8c"/>
<rect x="85" y="213" width="1" height="1" fill="#b8b8b8"/>
<rect x="86" y="213" width="1" height="1" fill="#8c8c8c"/>
<rect x="83" y="214" width="1" height="1" fill="#a8a8a8"/>
<rect x="84" y="214" width="1" height="1" fill="#5a5a5a"/>
<rect x="85" y="214" width="1" height="1" fill="#8c8c8c"/>
<rect x="86" y="214" width="1" height="1" fill="#5a5a5a"/>
<rect x="84" y="215" width="1" height="1" fill="#2c2c2c"/>
<rect x="85" y="215" width="1" height="1" fill="#5a5a5a"/>
<rect x="86" y="215" width="1" height="1" fill="#2c2c2c"/>
<rect x="85" y="216" width="1" height="1" fill="#2c2c2c"/>
<rect x="85" y="217" width="1" height="1" fill="#2c2c2c"/>
<polygon points="88.5,207.5 92.5,207.5 92.5,206.5 96.5,210.5 92.5,214.5 92.5,213.5 88.5,213.5" fill="#fff" stroke="#fff" stroke-width="2.4" stroke-linejoin="round"/>
<polygon points="88.5,207.5 92.5,207.5 92.5,206.5 96.5,210.5 92.5,214.5 92.5,213.5 88.5,213.5" fill="#3a4868" stroke="#1a2340" stroke-width="1"/>
<rect x="89" y="210" width="5" height="1" fill="#fff"/>
<rect x="91" y="208" width="1" height="5" fill="#fff"/>
<polygon points="38.5,227.5 42.5,231.5 38.5,235.5" fill="#fff" stroke="#a6a6a6" stroke-width="1"/>
<rect x="61" y="225" width="1" height="1" fill="#2c302a"/>
<rect x="61" y="226" width="1" height="1" fill="#2c302a"/>
<rect x="60" y="227" width="1" height="1" fill="#2c302a"/>
<rect x="61" y="227" width="1" height="1" fill="#566050"/>
<rect x="62" y="227" width="1" height="1" fill="#2c302a"/>
<rect x="59" y="228" width="1" height="1" fill="#9aa294"/>
<rect x="60" y="228" width="1" height="1" fill="#566050"/>
<rect x="61" y="228" width="1" height="1" fill="#8c9c84"/>
<rect x="62" y="228" width="1" height="1" fill="#566050"/>
<rect x="63" y="228" width="1" height="1" fill="#9aa294"/>
<rect x="58" y="229" width="1" height="1" fill="#2c302a"/>
<rect x="59" y="229" width="1" height="1" fill="#566050"/>
<rect x="60" y="229" width="1" height="1" fill="#8c9c84"/>
<rect x="61" y="229" width="1" height="1" fill="#bcd4ae"/>
<rect x="62" y="229" width="1" height="1" fill="#8c9c84"/>
<rect x="63" y="229" width="1" height="1" fill="#566050"/>
<rect x="64" y="229" width="1" height="1" fill="#2c302a"/>
<rect x="56" y="230" width="2" height="1" fill="#2c302a"/>
<rect x="58" y="230" width="1" height="1" fill="#566050"/>
<rect x="59" y="230" width="1" height="1" fill="#8c9c84"/>
<rect x="60" y="230" width="1" height="1" fill="#bcd4ae"/>
<rect x="61" y="230" width="1" height="1" fill="#daf0ca"/>
<rect x="62" y="230" width="1" height="1" fill="#bcd4ae"/>
<rect x="63" y="230" width="1" height="1" fill="#8c9c84"/>
<rect x="64" y="230" width="1" height="1" fill="#566050"/>
<rect x="65" y="230" width="2" height="1" fill="#2c302a"/>
<rect x="58" y="231" width="1" height="1" fill="#2c302a"/>
<rect x="59" y="231" width="1" height="1" fill="#566050"/>
<rect x="60" y="231" width="1" height="1" fill="#8c9c84"/>
<rect x="61" y="231" width="1" height="1" fill="#bcd4ae"/>
<rect x="62" y="231" width="1" height="1" fill="#8c9c84"/>
<rect x="63" y="231" width="1" height="1" fill="#566050"/>
<rect x="64" y="231" width="1" height="1" fill="#2c302a"/>
<rect x="59" y="232" width="1" height="1" fill="#9aa294"/>
<rect x="60" y="232" width="1" height="1" fill="#566050"/>
<rect x="61" y="232" width="1" height="1" fill="#8c9c84"/>
<rect x="62" y="232" width="1" height="1" fill="#566050"/>
<rect x="63" y="232" width="1" height="1" fill="#9aa294"/>
<rect x="60" y="233" width="1" height="1" fill="#2c302a"/>
<rect x="61" y="233" width="1" height="1" fill="#566050"/>
<rect x="62" y="233" width="1" height="1" fill="#2c302a"/>
<rect x="61" y="234" width="1" height="1" fill="#2c302a"/>
<rect x="61" y="235" width="1" height="1" fill="#2c302a"/>
<polygon points="14.5,245.5 18.5,249.5 14.5,253.5" fill="#fff" stroke="#a6a6a6" stroke-width="1"/>
<rect shape-rendering="geometricPrecision" x="31.5" y="241.5" width="3" height="3" rx="0.5" fill="#b4d2ec" stroke="#5580c0" stroke-width="1"/>
<rect shape-rendering="geometricPrecision" x="31.5" y="246.5" width="3" height="3" rx="0.5" fill="#b4d2ec" stroke="#5580c0" stroke-width="1"/>
<rect shape-rendering="geometricPrecision" x="31.5" y="251.5" width="3" height="3" rx="0.5" fill="#b4d2ec" stroke="#5580c0" stroke-width="1"/>
<rect shape-rendering="geometricPrecision" x="40.5" y="246.5" width="3" height="3" rx="0.5" fill="#ffeeb0" stroke="#c99a2e" stroke-width="1"/>
<rect x="36" y="244" width="1" height="1" fill="#4f76b8"/>
<rect x="37" y="245" width="1" height="1" fill="#4f76b8"/>
<rect x="38" y="246" width="1" height="1" fill="#4f76b8"/>
<rect x="38" y="249" width="1" height="1" fill="#4f76b8"/>
<rect x="37" y="250" width="1" height="1" fill="#4f76b8"/>
<rect x="36" y="251" width="1" height="1" fill="#4f76b8"/>
<rect x="16" y="321" width="1" height="1" fill="#2c2c2c"/>
<rect x="16" y="322" width="1" height="1" fill="#2c2c2c"/>
<rect x="15" y="323" width="1" height="1" fill="#2c2c2c"/>
<rect x="16" y="323" width="1" height="1" fill="#5a5a5a"/>
<rect x="17" y="323" width="1" height="1" fill="#2c2c2c"/>
<rect x="14" y="324" width="1" height="1" fill="#a8a8a8"/>
<rect x="15" y="324" width="1" height="1" fill="#5a5a5a"/>
<rect x="16" y="324" width="1" height="1" fill="#8c8c8c"/>
<rect x="17" y="324" width="1" height="1" fill="#5a5a5a"/>
<rect x="13" y="325" width="1" height="1" fill="#2c2c2c"/>
<rect x="14" y="325" width="1" height="1" fill="#5a5a5a"/>
<rect x="15" y="325" width="1" height="1" fill="#8c8c8c"/>
<rect x="16" y="325" width="1" height="1" fill="#b8b8b8"/>
<rect x="17" y="325" width="1" height="1" fill="#8c8c8c"/>
<rect x="11" y="326" width="2" height="1" fill="#2c2c2c"/>
<rect x="13" y="326" width="1" height="1" fill="#5a5a5a"/>
<rect x="14" y="326" width="1" height="1" fill="#8c8c8c"/>
<rect x="15" y="326" width="1" height="1" fill="#b8b8b8"/>
<rect x="16" y="326" width="1" height="1" fill="#d2d2d2"/>
<rect x="17" y="326" width="1" height="1" fill="#b8b8b8"/>
<rect x="13" y="327" width="1" height="1" fill="#2c2c2c"/>
<rect x="14" y="327" width="1" height="1" fill="#5a5a5a"/>
<rect x="15" y="327" width="1" height="1" fill="#8c8c8c"/>
<rect x="16" y="327" width="1" height="1" fill="#b8b8b8"/>
<rect x="17" y="327" width="1" height="1" fill="#8c8c8c"/>
<rect x="14" y="328" width="1" height="1" fill="#a8a8a8"/>
<rect x="15" y="328" width="1" height="1" fill="#5a5a5a"/>
<rect x="16" y="328" width="1" height="1" fill="#8c8c8c"/>
<rect x="17" y="328" width="1" height="1" fill="#5a5a5a"/>
<rect x="15" y="329" width="1" height="1" fill="#2c2c2c"/>
<rect x="16" y="329" width="1" height="1" fill="#5a5a5a"/>
<rect x="17" y="329" width="1" height="1" fill="#2c2c2c"/>
<rect x="16" y="330" width="1" height="1" fill="#2c2c2c"/>
<rect x="16" y="331" width="1" height="1" fill="#2c2c2c"/>
<polygon points="19.5,321.5 23.5,321.5 23.5,320.5 27.5,324.5 23.5,328.5 23.5,327.5 19.5,327.5" fill="#fff" stroke="#fff" stroke-width="2.4" stroke-linejoin="round"/>
<polygon points="19.5,321.5 23.5,321.5 23.5,320.5 27.5,324.5 23.5,328.5 23.5,327.5 19.5,327.5" fill="#3a4868" stroke="#1a2340" stroke-width="1"/>
<rect x="20" y="324" width="5" height="1" fill="#fff"/>
<rect x="22" y="322" width="1" height="5" fill="#fff"/>
<polygon shape-rendering="geometricPrecision" points="260,324 270,324 265,329.2" fill="#2c2236"/>
<rect x="980" y="319" width="15" height="15" fill="#8a9ab8"/>
<rect x="980" y="319" width="15" height="3" fill="#2f66b0"/>
<rect x="981" y="320" width="13" height="1" fill="url(#g11)"/>
<rect x="980" y="322" width="15" height="7" fill="#d4c08a"/>
<rect x="981" y="322" width="13" height="7" fill="url(#g12)"/>
<rect x="981" y="322" width="1" height="7" fill="#c4e030"/>
<rect x="981" y="330" width="6" height="3" fill="#e0f6ff"/>
<rect x="988" y="330" width="6" height="3" fill="#e0f6ff"/>
<path shape-rendering="geometricPrecision" d="M8,345.5 H5.5 V359.5 H12 M15,345.5 H17.5 V350" stroke="#4a5062" stroke-width="1.2" fill="none"/>
<rect x="8.5" y="344.5" width="6" height="2.4" rx="1.2" fill="#fff" stroke="#4a5062" stroke-width="1.1"/>
<rect x="7" y="349" width="5" height="1" fill="#1f5a9e"/>
<rect x="7" y="351" width="4" height="1" fill="#1f5a9e"/>
<rect x="7" y="353" width="3" height="1" fill="#1f5a9e"/>
<rect x="7" y="355" width="4" height="1" fill="#1f5a9e"/>
<circle shape-rendering="geometricPrecision" cx="16.5" cy="355.4" r="4.5" fill="#525868"/>
<path shape-rendering="geometricPrecision" d="M14.2,355.4 L15.9,357.2 L19,353.6" stroke="#fff" stroke-width="1.4" fill="none"/>
<path shape-rendering="geometricPrecision" d="M523,345.5 H520.5 V359.5 H527 M530,345.5 H532.5 V350" stroke="#4a5062" stroke-width="1.2" fill="none"/>
<rect x="523.5" y="344.5" width="6" height="2.4" rx="1.2" fill="#fff" stroke="#4a5062" stroke-width="1.1"/>
<rect x="522" y="349" width="5" height="1" fill="#1f5a9e"/>
<rect x="522" y="351" width="4" height="1" fill="#1f5a9e"/>
<rect x="522" y="353" width="3" height="1" fill="#1f5a9e"/>
<rect x="522" y="355" width="4" height="1" fill="#1f5a9e"/>
<circle shape-rendering="geometricPrecision" cx="531.5" cy="355.4" r="4.5" fill="#525868"/>
<path shape-rendering="geometricPrecision" d="M529.2,355.4 L530.9,357.2 L534,353.6" stroke="#fff" stroke-width="1.4" fill="none"/>
<polygon shape-rendering="geometricPrecision" points="17.5,371.5 17.5,376.5 12.5,376.5" fill="#565656" stroke="#242424" stroke-width="1"/>
<rect x="38" y="369" width="1" height="1" fill="#7a30cc"/>
<rect x="38" y="370" width="1" height="1" fill="#7a30cc"/>
<rect x="37" y="371" width="1" height="1" fill="#7a30cc"/>
<rect x="38" y="371" width="1" height="1" fill="#6c5898"/>
<rect x="39" y="371" width="1" height="1" fill="#7a30cc"/>
<rect x="36" y="372" width="1" height="1" fill="#b8a0dc"/>
<rect x="37" y="372" width="1" height="1" fill="#6c5898"/>
<rect x="38" y="372" width="1" height="1" fill="#9488ac"/>
<rect x="39" y="372" width="1" height="1" fill="#6c5898"/>
<rect x="40" y="372" width="1" height="1" fill="#b8a0dc"/>
<rect x="35" y="373" width="1" height="1" fill="#7a30cc"/>
<rect x="36" y="373" width="1" height="1" fill="#6c5898"/>
<rect x="37" y="373" width="1" height="1" fill="#9488ac"/>
<rect x="38" y="373" width="1" height="1" fill="#b8b4c4"/>
<rect x="39" y="373" width="1" height="1" fill="#9488ac"/>
<rect x="40" y="373" width="1" height="1" fill="#6c5898"/>
<rect x="41" y="373" width="1" height="1" fill="#7a30cc"/>
<rect x="33" y="374" width="2" height="1" fill="#7a30cc"/>
<rect x="35" y="374" width="1" height="1" fill="#6c5898"/>
<rect x="36" y="374" width="1" height="1" fill="#9488ac"/>
<rect x="37" y="374" width="1" height="1" fill="#b8b4c4"/>
<rect x="38" y="374" width="1" height="1" fill="#d2d2d6"/>
<rect x="39" y="374" width="1" height="1" fill="#b8b4c4"/>
<rect x="40" y="374" width="1" height="1" fill="#9488ac"/>
<rect x="41" y="374" width="1" height="1" fill="#6c5898"/>
<rect x="42" y="374" width="2" height="1" fill="#7a30cc"/>
<rect x="35" y="375" width="1" height="1" fill="#7a30cc"/>
<rect x="36" y="375" width="1" height="1" fill="#6c5898"/>
<rect x="37" y="375" width="1" height="1" fill="#9488ac"/>
<rect x="38" y="375" width="1" height="1" fill="#b8b4c4"/>
<rect x="39" y="375" width="1" height="1" fill="#9488ac"/>
<rect x="40" y="375" width="1" height="1" fill="#6c5898"/>
<rect x="41" y="375" width="1" height="1" fill="#7a30cc"/>
<rect x="36" y="376" width="1" height="1" fill="#b8a0dc"/>
<rect x="37" y="376" width="1" height="1" fill="#6c5898"/>
<rect x="38" y="376" width="1" height="1" fill="#9488ac"/>
<rect x="39" y="376" width="1" height="1" fill="#6c5898"/>
<rect x="40" y="376" width="1" height="1" fill="#b8a0dc"/>
<rect x="37" y="377" width="1" height="1" fill="#7a30cc"/>
<rect x="38" y="377" width="1" height="1" fill="#6c5898"/>
<rect x="39" y="377" width="1" height="1" fill="#7a30cc"/>
<rect x="38" y="378" width="1" height="1" fill="#7a30cc"/>
<rect x="38" y="379" width="1" height="1" fill="#7a30cc"/>
<rect x="57" y="390" width="1" height="1" fill="#2c2c2c"/>
<rect x="57" y="391" width="1" height="1" fill="#2c2c2c"/>
<rect x="56" y="392" width="1" height="1" fill="#2c2c2c"/>
<rect x="57" y="392" width="1" height="1" fill="#5a5a5a"/>
<rect x="58" y="392" width="1" height="1" fill="#2c2c2c"/>
<rect x="55" y="393" width="1" height="1" fill="#a8a8a8"/>
<rect x="56" y="393" width="1" height="1" fill="#5a5a5a"/>
<rect x="57" y="393" width="1" height="1" fill="#8c8c8c"/>
<rect x="58" y="393" width="1" height="1" fill="#5a5a5a"/>
<rect x="59" y="393" width="1" height="1" fill="#a8a8a8"/>
<rect x="54" y="394" width="1" height="1" fill="#2c2c2c"/>
<rect x="55" y="394" width="1" height="1" fill="#5a5a5a"/>
<rect x="56" y="394" width="1" height="1" fill="#8c8c8c"/>
<rect x="57" y="394" width="1" height="1" fill="#b8b8b8"/>
<rect x="58" y="394" width="1" height="1" fill="#8c8c8c"/>
<rect x="59" y="394" width="1" height="1" fill="#5a5a5a"/>
<rect x="60" y="394" width="1" height="1" fill="#2c2c2c"/>
<rect x="52" y="395" width="2" height="1" fill="#2c2c2c"/>
<rect x="54" y="395" width="1" height="1" fill="#5a5a5a"/>
<rect x="55" y="395" width="1" height="1" fill="#8c8c8c"/>
<rect x="56" y="395" width="1" height="1" fill="#b8b8b8"/>
<rect x="57" y="395" width="1" height="1" fill="#d2d2d2"/>
<rect x="58" y="395" width="1" height="1" fill="#b8b8b8"/>
<rect x="59" y="395" width="1" height="1" fill="#8c8c8c"/>
<rect x="60" y="395" width="1" height="1" fill="#5a5a5a"/>
<rect x="61" y="395" width="2" height="1" fill="#2c2c2c"/>
<rect x="54" y="396" width="1" height="1" fill="#2c2c2c"/>
<rect x="55" y="396" width="1" height="1" fill="#5a5a5a"/>
<rect x="56" y="396" width="1" height="1" fill="#8c8c8c"/>
<rect x="57" y="396" width="1" height="1" fill="#b8b8b8"/>
<rect x="58" y="396" width="1" height="1" fill="#8c8c8c"/>
<rect x="59" y="396" width="1" height="1" fill="#5a5a5a"/>
<rect x="60" y="396" width="1" height="1" fill="#2c2c2c"/>
<rect x="55" y="397" width="1" height="1" fill="#a8a8a8"/>
<rect x="56" y="397" width="1" height="1" fill="#5a5a5a"/>
<rect x="57" y="397" width="1" height="1" fill="#8c8c8c"/>
<rect x="58" y="397" width="1" height="1" fill="#5a5a5a"/>
<rect x="59" y="397" width="1" height="1" fill="#a8a8a8"/>
<rect x="56" y="398" width="1" height="1" fill="#2c2c2c"/>
<rect x="57" y="398" width="1" height="1" fill="#5a5a5a"/>
<rect x="58" y="398" width="1" height="1" fill="#2c2c2c"/>
<rect x="57" y="399" width="1" height="1" fill="#2c2c2c"/>
<rect x="57" y="400" width="1" height="1" fill="#2c2c2c"/>
<rect x="57" y="411" width="1" height="1" fill="#2c2c2c"/>
<rect x="57" y="412" width="1" height="1" fill="#2c2c2c"/>
<rect x="56" y="413" width="1" height="1" fill="#2c2c2c"/>
<rect x="57" y="413" width="1" height="1" fill="#5a5a5a"/>
<rect x="58" y="413" width="1" height="1" fill="#2c2c2c"/>
<rect x="55" y="414" width="1" height="1" fill="#a8a8a8"/>
<rect x="56" y="414" width="1" height="1" fill="#5a5a5a"/>
<rect x="57" y="414" width="1" height="1" fill="#8c8c8c"/>
<rect x="58" y="414" width="1" height="1" fill="#5a5a5a"/>
<rect x="59" y="414" width="1" height="1" fill="#a8a8a8"/>
<rect x="54" y="415" width="1" height="1" fill="#2c2c2c"/>
<rect x="55" y="415" width="1" height="1" fill="#5a5a5a"/>
<rect x="56" y="415" width="1" height="1" fill="#8c8c8c"/>
<rect x="57" y="415" width="1" height="1" fill="#b8b8b8"/>
<rect x="58" y="415" width="1" height="1" fill="#8c8c8c"/>
<rect x="59" y="415" width="1" height="1" fill="#5a5a5a"/>
<rect x="60" y="415" width="1" height="1" fill="#2c2c2c"/>
<rect x="52" y="416" width="2" height="1" fill="#2c2c2c"/>
<rect x="54" y="416" width="1" height="1" fill="#5a5a5a"/>
<rect x="55" y="416" width="1" height="1" fill="#8c8c8c"/>
<rect x="56" y="416" width="1" height="1" fill="#b8b8b8"/>
<rect x="57" y="416" width="1" height="1" fill="#d2d2d2"/>
<rect x="58" y="416" width="1" height="1" fill="#b8b8b8"/>
<rect x="59" y="416" width="1" height="1" fill="#8c8c8c"/>
<rect x="60" y="416" width="1" height="1" fill="#5a5a5a"/>
<rect x="61" y="416" width="2" height="1" fill="#2c2c2c"/>
<rect x="54" y="417" width="1" height="1" fill="#2c2c2c"/>
<rect x="55" y="417" width="1" height="1" fill="#5a5a5a"/>
<rect x="56" y="417" width="1" height="1" fill="#8c8c8c"/>
<rect x="57" y="417" width="1" height="1" fill="#b8b8b8"/>
<rect x="58" y="417" width="1" height="1" fill="#8c8c8c"/>
<rect x="59" y="417" width="1" height="1" fill="#5a5a5a"/>
<rect x="60" y="417" width="1" height="1" fill="#2c2c2c"/>
<rect x="55" y="418" width="1" height="1" fill="#a8a8a8"/>
<rect x="56" y="418" width="1" height="1" fill="#5a5a5a"/>
<rect x="57" y="418" width="1" height="1" fill="#8c8c8c"/>
<rect x="58" y="418" width="1" height="1" fill="#5a5a5a"/>
<rect x="59" y="418" width="1" height="1" fill="#a8a8a8"/>
<rect x="56" y="419" width="1" height="1" fill="#2c2c2c"/>
<rect x="57" y="419" width="1" height="1" fill="#5a5a5a"/>
<rect x="58" y="419" width="1" height="1" fill="#2c2c2c"/>
<rect x="57" y="420" width="1" height="1" fill="#2c2c2c"/>
<rect x="57" y="421" width="1" height="1" fill="#2c2c2c"/>
<rect x="38" y="432" width="1" height="1" fill="#1e1e88"/>
<rect x="38" y="433" width="1" height="1" fill="#1e1e88"/>
<rect x="37" y="434" width="1" height="1" fill="#1e1e88"/>
<rect x="38" y="434" width="1" height="1" fill="#484894"/>
<rect x="39" y="434" width="1" height="1" fill="#1e1e88"/>
<rect x="36" y="435" width="1" height="1" fill="#9090c4"/>
<rect x="37" y="435" width="1" height="1" fill="#484894"/>
<rect x="38" y="435" width="1" height="1" fill="#8080b8"/>
<rect x="39" y="435" width="1" height="1" fill="#484894"/>
<rect x="40" y="435" width="1" height="1" fill="#9090c4"/>
<rect x="35" y="436" width="1" height="1" fill="#1e1e88"/>
<rect x="36" y="436" width="1" height="1" fill="#484894"/>
<rect x="37" y="436" width="1" height="1" fill="#8080b8"/>
<rect x="38" y="436" width="1" height="1" fill="#b0b0d4"/>
<rect x="39" y="436" width="1" height="1" fill="#8080b8"/>
<rect x="40" y="436" width="1" height="1" fill="#484894"/>
<rect x="41" y="436" width="1" height="1" fill="#1e1e88"/>
<rect x="33" y="437" width="2" height="1" fill="#1e1e88"/>
<rect x="35" y="437" width="1" height="1" fill="#484894"/>
<rect x="36" y="437" width="1" height="1" fill="#8080b8"/>
<rect x="37" y="437" width="1" height="1" fill="#b0b0d4"/>
<rect x="38" y="437" width="1" height="1" fill="#d2d2e8"/>
<rect x="39" y="437" width="1" height="1" fill="#b0b0d4"/>
<rect x="40" y="437" width="1" height="1" fill="#8080b8"/>
<rect x="41" y="437" width="1" height="1" fill="#484894"/>
<rect x="42" y="437" width="2" height="1" fill="#1e1e88"/>
<rect x="35" y="438" width="1" height="1" fill="#1e1e88"/>
<rect x="36" y="438" width="1" height="1" fill="#484894"/>
<rect x="37" y="438" width="1" height="1" fill="#8080b8"/>
<rect x="38" y="438" width="1" height="1" fill="#b0b0d4"/>
<rect x="39" y="438" width="1" height="1" fill="#8080b8"/>
<rect x="40" y="438" width="1" height="1" fill="#484894"/>
<rect x="41" y="438" width="1" height="1" fill="#1e1e88"/>
<rect x="36" y="439" width="1" height="1" fill="#9090c4"/>
<rect x="37" y="439" width="1" height="1" fill="#484894"/>
<rect x="38" y="439" width="1" height="1" fill="#8080b8"/>
<rect x="39" y="439" width="1" height="1" fill="#484894"/>
<rect x="40" y="439" width="1" height="1" fill="#9090c4"/>
<rect x="37" y="440" width="1" height="1" fill="#1e1e88"/>
<rect x="38" y="440" width="1" height="1" fill="#484894"/>
<rect x="39" y="440" width="1" height="1" fill="#1e1e88"/>
<rect x="38" y="441" width="1" height="1" fill="#1e1e88"/>
<rect x="38" y="442" width="1" height="1" fill="#1e1e88"/>
<rect x="38" y="453" width="1" height="1" fill="#7a30cc"/>
<rect x="38" y="454" width="1" height="1" fill="#7a30cc"/>
<rect x="37" y="455" width="1" height="1" fill="#7a30cc"/>
<rect x="38" y="455" width="1" height="1" fill="#6c5898"/>
<rect x="39" y="455" width="1" height="1" fill="#7a30cc"/>
<rect x="36" y="456" width="1" height="1" fill="#b8a0dc"/>
<rect x="37" y="456" width="1" height="1" fill="#6c5898"/>
<rect x="38" y="456" width="1" height="1" fill="#9488ac"/>
<rect x="39" y="456" width="1" height="1" fill="#6c5898"/>
<rect x="40" y="456" width="1" height="1" fill="#b8a0dc"/>
<rect x="35" y="457" width="1" height="1" fill="#7a30cc"/>
<rect x="36" y="457" width="1" height="1" fill="#6c5898"/>
<rect x="37" y="457" width="1" height="1" fill="#9488ac"/>
<rect x="38" y="457" width="1" height="1" fill="#b8b4c4"/>
<rect x="39" y="457" width="1" height="1" fill="#9488ac"/>
<rect x="40" y="457" width="1" height="1" fill="#6c5898"/>
<rect x="41" y="457" width="1" height="1" fill="#7a30cc"/>
<rect x="33" y="458" width="2" height="1" fill="#7a30cc"/>
<rect x="35" y="458" width="1" height="1" fill="#6c5898"/>
<rect x="36" y="458" width="1" height="1" fill="#9488ac"/>
<rect x="37" y="458" width="1" height="1" fill="#b8b4c4"/>
<rect x="38" y="458" width="1" height="1" fill="#d2d2d6"/>
<rect x="39" y="458" width="1" height="1" fill="#b8b4c4"/>
<rect x="40" y="458" width="1" height="1" fill="#9488ac"/>
<rect x="41" y="458" width="1" height="1" fill="#6c5898"/>
<rect x="42" y="458" width="2" height="1" fill="#7a30cc"/>
<rect x="35" y="459" width="1" height="1" fill="#7a30cc"/>
<rect x="36" y="459" width="1" height="1" fill="#6c5898"/>
<rect x="37" y="459" width="1" height="1" fill="#9488ac"/>
<rect x="38" y="459" width="1" height="1" fill="#b8b4c4"/>
<rect x="39" y="459" width="1" height="1" fill="#9488ac"/>
<rect x="40" y="459" width="1" height="1" fill="#6c5898"/>
<rect x="41" y="459" width="1" height="1" fill="#7a30cc"/>
<rect x="36" y="460" width="1" height="1" fill="#b8a0dc"/>
<rect x="37" y="460" width="1" height="1" fill="#6c5898"/>
<rect x="38" y="460" width="1" height="1" fill="#9488ac"/>
<rect x="39" y="460" width="1" height="1" fill="#6c5898"/>
<rect x="40" y="460" width="1" height="1" fill="#b8a0dc"/>
<rect x="37" y="461" width="1" height="1" fill="#7a30cc"/>
<rect x="38" y="461" width="1" height="1" fill="#6c5898"/>
<rect x="39" y="461" width="1" height="1" fill="#7a30cc"/>
<rect x="38" y="462" width="1" height="1" fill="#7a30cc"/>
<rect x="38" y="463" width="1" height="1" fill="#7a30cc"/>
<rect x="38" y="474" width="1" height="1" fill="#2c302a"/>
<rect x="38" y="475" width="1" height="1" fill="#2c302a"/>
<rect x="37" y="476" width="1" height="1" fill="#2c302a"/>
<rect x="38" y="476" width="1" height="1" fill="#566050"/>
<rect x="39" y="476" width="1" height="1" fill="#2c302a"/>
<rect x="36" y="477" width="1" height="1" fill="#9aa294"/>
<rect x="37" y="477" width="1" height="1" fill="#566050"/>
<rect x="38" y="477" width="1" height="1" fill="#8c9c84"/>
<rect x="39" y="477" width="1" height="1" fill="#566050"/>
<rect x="40" y="477" width="1" height="1" fill="#9aa294"/>
<rect x="35" y="478" width="1" height="1" fill="#2c302a"/>
<rect x="36" y="478" width="1" height="1" fill="#566050"/>
<rect x="37" y="478" width="1" height="1" fill="#8c9c84"/>
<rect x="38" y="478" width="1" height="1" fill="#bcd4ae"/>
<rect x="39" y="478" width="1" height="1" fill="#8c9c84"/>
<rect x="40" y="478" width="1" height="1" fill="#566050"/>
<rect x="41" y="478" width="1" height="1" fill="#2c302a"/>
<rect x="33" y="479" width="2" height="1" fill="#2c302a"/>
<rect x="35" y="479" width="1" height="1" fill="#566050"/>
<rect x="36" y="479" width="1" height="1" fill="#8c9c84"/>
<rect x="37" y="479" width="1" height="1" fill="#bcd4ae"/>
<rect x="38" y="479" width="1" height="1" fill="#daf0ca"/>
<rect x="39" y="479" width="1" height="1" fill="#bcd4ae"/>
<rect x="40" y="479" width="1" height="1" fill="#8c9c84"/>
<rect x="41" y="479" width="1" height="1" fill="#566050"/>
<rect x="42" y="479" width="2" height="1" fill="#2c302a"/>
<rect x="35" y="480" width="1" height="1" fill="#2c302a"/>
<rect x="36" y="480" width="1" height="1" fill="#566050"/>
<rect x="37" y="480" width="1" height="1" fill="#8c9c84"/>
<rect x="38" y="480" width="1" height="1" fill="#bcd4ae"/>
<rect x="39" y="480" width="1" height="1" fill="#8c9c84"/>
<rect x="40" y="480" width="1" height="1" fill="#566050"/>
<rect x="41" y="480" width="1" height="1" fill="#2c302a"/>
<rect x="36" y="481" width="1" height="1" fill="#9aa294"/>
<rect x="37" y="481" width="1" height="1" fill="#566050"/>
<rect x="38" y="481" width="1" height="1" fill="#8c9c84"/>
<rect x="39" y="481" width="1" height="1" fill="#566050"/>
<rect x="40" y="481" width="1" height="1" fill="#9aa294"/>
<rect x="37" y="482" width="1" height="1" fill="#2c302a"/>
<rect x="38" y="482" width="1" height="1" fill="#566050"/>
<rect x="39" y="482" width="1" height="1" fill="#2c302a"/>
<rect x="38" y="483" width="1" height="1" fill="#2c302a"/>
<rect x="38" y="484" width="1" height="1" fill="#2c302a"/>
<polygon shape-rendering="geometricPrecision" points="532.5,371.5 532.5,376.5 527.5,376.5" fill="#565656" stroke="#242424" stroke-width="1"/>
<rect x="553" y="369" width="1" height="1" fill="#7a30cc"/>
<rect x="553" y="370" width="1" height="1" fill="#7a30cc"/>
<rect x="552" y="371" width="1" height="1" fill="#7a30cc"/>
<rect x="553" y="371" width="1" height="1" fill="#6c5898"/>
<rect x="554" y="371" width="1" height="1" fill="#7a30cc"/>
<rect x="551" y="372" width="1" height="1" fill="#b8a0dc"/>
<rect x="552" y="372" width="1" height="1" fill="#6c5898"/>
<rect x="553" y="372" width="1" height="1" fill="#9488ac"/>
<rect x="554" y="372" width="1" height="1" fill="#6c5898"/>
<rect x="555" y="372" width="1" height="1" fill="#b8a0dc"/>
<rect x="550" y="373" width="1" height="1" fill="#7a30cc"/>
<rect x="551" y="373" width="1" height="1" fill="#6c5898"/>
<rect x="552" y="373" width="1" height="1" fill="#9488ac"/>
<rect x="553" y="373" width="1" height="1" fill="#b8b4c4"/>
<rect x="554" y="373" width="1" height="1" fill="#9488ac"/>
<rect x="555" y="373" width="1" height="1" fill="#6c5898"/>
<rect x="556" y="373" width="1" height="1" fill="#7a30cc"/>
<rect x="548" y="374" width="2" height="1" fill="#7a30cc"/>
<rect x="550" y="374" width="1" height="1" fill="#6c5898"/>
<rect x="551" y="374" width="1" height="1" fill="#9488ac"/>
<rect x="552" y="374" width="1" height="1" fill="#b8b4c4"/>
<rect x="553" y="374" width="1" height="1" fill="#d2d2d6"/>
<rect x="554" y="374" width="1" height="1" fill="#b8b4c4"/>
<rect x="555" y="374" width="1" height="1" fill="#9488ac"/>
<rect x="556" y="374" width="1" height="1" fill="#6c5898"/>
<rect x="557" y="374" width="2" height="1" fill="#7a30cc"/>
<rect x="550" y="375" width="1" height="1" fill="#7a30cc"/>
<rect x="551" y="375" width="1" height="1" fill="#6c5898"/>
<rect x="552" y="375" width="1" height="1" fill="#9488ac"/>
<rect x="553" y="375" width="1" height="1" fill="#b8b4c4"/>
<rect x="554" y="375" width="1" height="1" fill="#9488ac"/>
<rect x="555" y="375" width="1" height="1" fill="#6c5898"/>
<rect x="556" y="375" width="1" height="1" fill="#7a30cc"/>
<rect x="551" y="376" width="1" height="1" fill="#b8a0dc"/>
<rect x="552" y="376" width="1" height="1" fill="#6c5898"/>
<rect x="553" y="376" width="1" height="1" fill="#9488ac"/>
<rect x="554" y="376" width="1" height="1" fill="#6c5898"/>
<rect x="555" y="376" width="1" height="1" fill="#b8a0dc"/>
<rect x="552" y="377" width="1" height="1" fill="#7a30cc"/>
<rect x="553" y="377" width="1" height="1" fill="#6c5898"/>
<rect x="554" y="377" width="1" height="1" fill="#7a30cc"/>
<rect x="553" y="378" width="1" height="1" fill="#7a30cc"/>
<rect x="553" y="379" width="1" height="1" fill="#7a30cc"/>
<rect x="572" y="390" width="1" height="1" fill="#2c2c2c"/>
<rect x="572" y="391" width="1" height="1" fill="#2c2c2c"/>
<rect x="571" y="392" width="1" height="1" fill="#2c2c2c"/>
<rect x="572" y="392" width="1" height="1" fill="#5a5a5a"/>
<rect x="573" y="392" width="1" height="1" fill="#2c2c2c"/>
<rect x="570" y="393" width="1" height="1" fill="#a8a8a8"/>
<rect x="571" y="393" width="1" height="1" fill="#5a5a5a"/>
<rect x="572" y="393" width="1" height="1" fill="#8c8c8c"/>
<rect x="573" y="393" width="1" height="1" fill="#5a5a5a"/>
<rect x="574" y="393" width="1" height="1" fill="#a8a8a8"/>
<rect x="569" y="394" width="1" height="1" fill="#2c2c2c"/>
<rect x="570" y="394" width="1" height="1" fill="#5a5a5a"/>
<rect x="571" y="394" width="1" height="1" fill="#8c8c8c"/>
<rect x="572" y="394" width="1" height="1" fill="#b8b8b8"/>
<rect x="573" y="394" width="1" height="1" fill="#8c8c8c"/>
<rect x="574" y="394" width="1" height="1" fill="#5a5a5a"/>
<rect x="575" y="394" width="1" height="1" fill="#2c2c2c"/>
<rect x="567" y="395" width="2" height="1" fill="#2c2c2c"/>
<rect x="569" y="395" width="1" height="1" fill="#5a5a5a"/>
<rect x="570" y="395" width="1" height="1" fill="#8c8c8c"/>
<rect x="571" y="395" width="1" height="1" fill="#b8b8b8"/>
<rect x="572" y="395" width="1" height="1" fill="#d2d2d2"/>
<rect x="573" y="395" width="1" height="1" fill="#b8b8b8"/>
<rect x="574" y="395" width="1" height="1" fill="#8c8c8c"/>
<rect x="575" y="395" width="1" height="1" fill="#5a5a5a"/>
<rect x="576" y="395" width="2" height="1" fill="#2c2c2c"/>
<rect x="569" y="396" width="1" height="1" fill="#2c2c2c"/>
<rect x="570" y="396" width="1" height="1" fill="#5a5a5a"/>
<rect x="571" y="396" width="1" height="1" fill="#8c8c8c"/>
<rect x="572" y="396" width="1" height="1" fill="#b8b8b8"/>
<rect x="573" y="396" width="1" height="1" fill="#8c8c8c"/>
<rect x="574" y="396" width="1" height="1" fill="#5a5a5a"/>
<rect x="575" y="396" width="1" height="1" fill="#2c2c2c"/>
<rect x="570" y="397" width="1" height="1" fill="#a8a8a8"/>
<rect x="571" y="397" width="1" height="1" fill="#5a5a5a"/>
<rect x="572" y="397" width="1" height="1" fill="#8c8c8c"/>
<rect x="573" y="397" width="1" height="1" fill="#5a5a5a"/>
<rect x="574" y="397" width="1" height="1" fill="#a8a8a8"/>
<rect x="571" y="398" width="1" height="1" fill="#2c2c2c"/>
<rect x="572" y="398" width="1" height="1" fill="#5a5a5a"/>
<rect x="573" y="398" width="1" height="1" fill="#2c2c2c"/>
<rect x="572" y="399" width="1" height="1" fill="#2c2c2c"/>
<rect x="572" y="400" width="1" height="1" fill="#2c2c2c"/>
<rect x="553" y="432" width="1" height="1" fill="#1e1e88"/>
<rect x="553" y="433" width="1" height="1" fill="#1e1e88"/>
<rect x="552" y="434" width="1" height="1" fill="#1e1e88"/>
<rect x="553" y="434" width="1" height="1" fill="#484894"/>
<rect x="554" y="434" width="1" height="1" fill="#1e1e88"/>
<rect x="551" y="435" width="1" height="1" fill="#9090c4"/>
<rect x="552" y="435" width="1" height="1" fill="#484894"/>
<rect x="553" y="435" width="1" height="1" fill="#8080b8"/>
<rect x="554" y="435" width="1" height="1" fill="#484894"/>
<rect x="555" y="435" width="1" height="1" fill="#9090c4"/>
<rect x="550" y="436" width="1" height="1" fill="#1e1e88"/>
<rect x="551" y="436" width="1" height="1" fill="#484894"/>
<rect x="552" y="436" width="1" height="1" fill="#8080b8"/>
<rect x="553" y="436" width="1" height="1" fill="#b0b0d4"/>
<rect x="554" y="436" width="1" height="1" fill="#8080b8"/>
<rect x="555" y="436" width="1" height="1" fill="#484894"/>
<rect x="556" y="436" width="1" height="1" fill="#1e1e88"/>
<rect x="548" y="437" width="2" height="1" fill="#1e1e88"/>
<rect x="550" y="437" width="1" height="1" fill="#484894"/>
<rect x="551" y="437" width="1" height="1" fill="#8080b8"/>
<rect x="552" y="437" width="1" height="1" fill="#b0b0d4"/>
<rect x="553" y="437" width="1" height="1" fill="#d2d2e8"/>
<rect x="554" y="437" width="1" height="1" fill="#b0b0d4"/>
<rect x="555" y="437" width="1" height="1" fill="#8080b8"/>
<rect x="556" y="437" width="1" height="1" fill="#484894"/>
<rect x="557" y="437" width="2" height="1" fill="#1e1e88"/>
<rect x="550" y="438" width="1" height="1" fill="#1e1e88"/>
<rect x="551" y="438" width="1" height="1" fill="#484894"/>
<rect x="552" y="438" width="1" height="1" fill="#8080b8"/>
<rect x="553" y="438" width="1" height="1" fill="#b0b0d4"/>
<rect x="554" y="438" width="1" height="1" fill="#8080b8"/>
<rect x="555" y="438" width="1" height="1" fill="#484894"/>
<rect x="556" y="438" width="1" height="1" fill="#1e1e88"/>
<rect x="551" y="439" width="1" height="1" fill="#9090c4"/>
<rect x="552" y="439" width="1" height="1" fill="#484894"/>
<rect x="553" y="439" width="1" height="1" fill="#8080b8"/>
<rect x="554" y="439" width="1" height="1" fill="#484894"/>
<rect x="555" y="439" width="1" height="1" fill="#9090c4"/>
<rect x="552" y="440" width="1" height="1" fill="#1e1e88"/>
<rect x="553" y="440" width="1" height="1" fill="#484894"/>
<rect x="554" y="440" width="1" height="1" fill="#1e1e88"/>
<rect x="553" y="441" width="1" height="1" fill="#1e1e88"/>
<rect x="553" y="442" width="1" height="1" fill="#1e1e88"/>
<rect x="553" y="453" width="1" height="1" fill="#7a30cc"/>
<rect x="553" y="454" width="1" height="1" fill="#7a30cc"/>
<rect x="552" y="455" width="1" height="1" fill="#7a30cc"/>
<rect x="553" y="455" width="1" height="1" fill="#6c5898"/>
<rect x="554" y="455" width="1" height="1" fill="#7a30cc"/>
<rect x="551" y="456" width="1" height="1" fill="#b8a0dc"/>
<rect x="552" y="456" width="1" height="1" fill="#6c5898"/>
<rect x="553" y="456" width="1" height="1" fill="#9488ac"/>
<rect x="554" y="456" width="1" height="1" fill="#6c5898"/>
<rect x="555" y="456" width="1" height="1" fill="#b8a0dc"/>
<rect x="550" y="457" width="1" height="1" fill="#7a30cc"/>
<rect x="551" y="457" width="1" height="1" fill="#6c5898"/>
<rect x="552" y="457" width="1" height="1" fill="#9488ac"/>
<rect x="553" y="457" width="1" height="1" fill="#b8b4c4"/>
<rect x="554" y="457" width="1" height="1" fill="#9488ac"/>
<rect x="555" y="457" width="1" height="1" fill="#6c5898"/>
<rect x="556" y="457" width="1" height="1" fill="#7a30cc"/>
<rect x="548" y="458" width="2" height="1" fill="#7a30cc"/>
<rect x="550" y="458" width="1" height="1" fill="#6c5898"/>
<rect x="551" y="458" width="1" height="1" fill="#9488ac"/>
<rect x="552" y="458" width="1" height="1" fill="#b8b4c4"/>
<rect x="553" y="458" width="1" height="1" fill="#d2d2d6"/>
<rect x="554" y="458" width="1" height="1" fill="#b8b4c4"/>
<rect x="555" y="458" width="1" height="1" fill="#9488ac"/>
<rect x="556" y="458" width="1" height="1" fill="#6c5898"/>
<rect x="557" y="458" width="2" height="1" fill="#7a30cc"/>
<rect x="550" y="459" width="1" height="1" fill="#7a30cc"/>
<rect x="551" y="459" width="1" height="1" fill="#6c5898"/>
<rect x="552" y="459" width="1" height="1" fill="#9488ac"/>
<rect x="553" y="459" width="1" height="1" fill="#b8b4c4"/>
<rect x="554" y="459" width="1" height="1" fill="#9488ac"/>
<rect x="555" y="459" width="1" height="1" fill="#6c5898"/>
<rect x="556" y="459" width="1" height="1" fill="#7a30cc"/>
<rect x="551" y="460" width="1" height="1" fill="#b8a0dc"/>
<rect x="552" y="460" width="1" height="1" fill="#6c5898"/>
<rect x="553" y="460" width="1" height="1" fill="#9488ac"/>
<rect x="554" y="460" width="1" height="1" fill="#6c5898"/>
<rect x="555" y="460" width="1" height="1" fill="#b8a0dc"/>
<rect x="552" y="461" width="1" height="1" fill="#7a30cc"/>
<rect x="553" y="461" width="1" height="1" fill="#6c5898"/>
<rect x="554" y="461" width="1" height="1" fill="#7a30cc"/>
<rect x="553" y="462" width="1" height="1" fill="#7a30cc"/>
<rect x="553" y="463" width="1" height="1" fill="#7a30cc"/>
<rect x="553" y="474" width="1" height="1" fill="#2c302a"/>
<rect x="553" y="475" width="1" height="1" fill="#2c302a"/>
<rect x="552" y="476" width="1" height="1" fill="#2c302a"/>
<rect x="553" y="476" width="1" height="1" fill="#566050"/>
<rect x="554" y="476" width="1" height="1" fill="#2c302a"/>
<rect x="551" y="477" width="1" height="1" fill="#9aa294"/>
<rect x="552" y="477" width="1" height="1" fill="#566050"/>
<rect x="553" y="477" width="1" height="1" fill="#8c9c84"/>
<rect x="554" y="477" width="1" height="1" fill="#566050"/>
<rect x="555" y="477" width="1" height="1" fill="#9aa294"/>
<rect x="550" y="478" width="1" height="1" fill="#2c302a"/>
<rect x="551" y="478" width="1" height="1" fill="#566050"/>
<rect x="552" y="478" width="1" height="1" fill="#8c9c84"/>
<rect x="553" y="478" width="1" height="1" fill="#bcd4ae"/>
<rect x="554" y="478" width="1" height="1" fill="#8c9c84"/>
<rect x="555" y="478" width="1" height="1" fill="#566050"/>
<rect x="556" y="478" width="1" height="1" fill="#2c302a"/>
<rect x="548" y="479" width="2" height="1" fill="#2c302a"/>
<rect x="550" y="479" width="1" height="1" fill="#566050"/>
<rect x="551" y="479" width="1" height="1" fill="#8c9c84"/>
<rect x="552" y="479" width="1" height="1" fill="#bcd4ae"/>
<rect x="553" y="479" width="1" height="1" fill="#daf0ca"/>
<rect x="554" y="479" width="1" height="1" fill="#bcd4ae"/>
<rect x="555" y="479" width="1" height="1" fill="#8c9c84"/>
<rect x="556" y="479" width="1" height="1" fill="#566050"/>
<rect x="557" y="479" width="2" height="1" fill="#2c302a"/>
<rect x="550" y="480" width="1" height="1" fill="#2c302a"/>
<rect x="551" y="480" width="1" height="1" fill="#566050"/>
<rect x="552" y="480" width="1" height="1" fill="#8c9c84"/>
<rect x="553" y="480" width="1" height="1" fill="#bcd4ae"/>
<rect x="554" y="480" width="1" height="1" fill="#8c9c84"/>
<rect x="555" y="480" width="1" height="1" fill="#566050"/>
<rect x="556" y="480" width="1" height="1" fill="#2c302a"/>
<rect x="551" y="481" width="1" height="1" fill="#9aa294"/>
<rect x="552" y="481" width="1" height="1" fill="#566050"/>
<rect x="553" y="481" width="1" height="1" fill="#8c9c84"/>
<rect x="554" y="481" width="1" height="1" fill="#566050"/>
<rect x="555" y="481" width="1" height="1" fill="#9aa294"/>
<rect x="552" y="482" width="1" height="1" fill="#2c302a"/>
<rect x="553" y="482" width="1" height="1" fill="#566050"/>
<rect x="554" y="482" width="1" height="1" fill="#2c302a"/>
<rect x="553" y="483" width="1" height="1" fill="#2c302a"/>
<rect x="553" y="484" width="1" height="1" fill="#2c302a"/>
<rect x="778" y="35" width="1" height="18" fill="#a0a0a0"/>
<rect x="832" y="35" width="1" height="18" fill="#a0a0a0"/>
<rect x="886" y="35" width="1" height="18" fill="#a0a0a0"/>
<rect x="970" y="35" width="1" height="18" fill="#a0a0a0"/>
<rect x="652" y="38" width="12" height="12" fill="#12a04a"/>
<rect x="653" y="39" width="10" height="10" fill="url(#g13)"/>
<path shape-rendering="geometricPrecision" d="M653.5 45.5 H656 L657.8 47.8 L660.9 40.8" stroke="#fff" stroke-width="1.15" fill="none"/>
<polygon points="673,42 680,42 676.5,46" fill="#000"/>
<path shape-rendering="geometricPrecision" d="M687.5,47.5 L693.3,36.5" stroke="#1c5cae" stroke-width="1.4" fill="none"/>
<path shape-rendering="geometricPrecision" d="M687.0,47.5 L697,47.5" stroke="#1c5cae" stroke-width="1.2" fill="none"/>
<path shape-rendering="geometricPrecision" d="M693.7,36.8 L697.6,46.0" stroke="#1c5cae" stroke-width="1.0" fill="none"/>
<path shape-rendering="geometricPrecision" d="M695.3000000000001,37.199999999999996 L699.2,46.0" stroke="#1c5cae" stroke-width="1.0" fill="none"/>
<path shape-rendering="geometricPrecision" d="M694.5,36.8 L698.4,46.0" stroke="#1c5cae" stroke-width="1.2" fill="none" stroke-dasharray="0.8 1.2" stroke-opacity="0.7"/>
<rect x="696" y="44" width="7" height="8" fill="#12a04a"/>
<rect x="697" y="45" width="5" height="6" fill="url(#g14)"/>
<path shape-rendering="geometricPrecision" d="M697.8,48.2 L699.2,50 L701.4,45.8" stroke="#fff" stroke-width="1.3" fill="none"/>
<path shape-rendering="geometricPrecision" d="M710.5,47.5 L716.3,36.5" stroke="#1c5cae" stroke-width="1.4" fill="none"/>
<path shape-rendering="geometricPrecision" d="M710.0,47.5 L720,47.5" stroke="#1c5cae" stroke-width="1.2" fill="none"/>
<path shape-rendering="geometricPrecision" d="M716.7,36.8 L720.6,46.0" stroke="#1c5cae" stroke-width="1.0" fill="none"/>
<path shape-rendering="geometricPrecision" d="M718.3000000000001,37.199999999999996 L722.2,46.0" stroke="#1c5cae" stroke-width="1.0" fill="none"/>
<path shape-rendering="geometricPrecision" d="M717.5,36.8 L721.4,46.0" stroke="#1c5cae" stroke-width="1.2" fill="none" stroke-dasharray="0.8 1.2" stroke-opacity="0.7"/>
<rect x="719" y="44" width="7" height="8" fill="#16357a"/>
<rect x="720" y="45" width="5" height="6" fill="#2f5aa0"/>
<rect x="721" y="46" width="1" height="1" fill="#e6eefa"/>
<rect x="724" y="46" width="1" height="1" fill="#e6eefa"/>
<rect x="722" y="47" width="1" height="1" fill="#e6eefa"/>
<rect x="723" y="47" width="1" height="1" fill="#e6eefa"/>
<rect x="722" y="48" width="1" height="1" fill="#e6eefa"/>
<rect x="723" y="48" width="1" height="1" fill="#e6eefa"/>
<rect x="721" y="49" width="1" height="1" fill="#e6eefa"/>
<rect x="724" y="49" width="1" height="1" fill="#e6eefa"/>
<path shape-rendering="geometricPrecision" d="M733.5,43.5 L737.3,36.5" stroke="#1c5cae" stroke-width="1.4" fill="none"/>
<path shape-rendering="geometricPrecision" d="M733.0,43.5 L740.5,43.5" stroke="#1c5cae" stroke-width="1.2" fill="none"/>
<path shape-rendering="geometricPrecision" d="M737.7,36.8 L741.1,43.0" stroke="#1c5cae" stroke-width="1.0" fill="none"/>
<path shape-rendering="geometricPrecision" d="M739.3000000000001,37.199999999999996 L742.7,43.0" stroke="#1c5cae" stroke-width="1.0" fill="none"/>
<path shape-rendering="geometricPrecision" d="M738.5,36.8 L741.9,43.0" stroke="#1c5cae" stroke-width="1.2" fill="none" stroke-dasharray="0.8 1.2" stroke-opacity="0.7"/>
<rect x="739" y="40" width="4" height="8" fill="#fff"/>
<path shape-rendering="geometricPrecision" d="M736.5,47.5 L740.3,40.5" stroke="#1c5cae" stroke-width="1.4" fill="none"/>
<path shape-rendering="geometricPrecision" d="M736.0,47.5 L743,47.5" stroke="#1c5cae" stroke-width="1.2" fill="none"/>
<path shape-rendering="geometricPrecision" d="M740.7,40.8 L743.6,46.5" stroke="#1c5cae" stroke-width="1.0" fill="none"/>
<path shape-rendering="geometricPrecision" d="M742.3000000000001,41.199999999999996 L745.2,46.5" stroke="#1c5cae" stroke-width="1.0" fill="none"/>
<path shape-rendering="geometricPrecision" d="M741.5,40.8 L744.4,46.5" stroke="#1c5cae" stroke-width="1.2" fill="none" stroke-dasharray="0.8 1.2" stroke-opacity="0.7"/>
<rect x="742" y="44" width="7" height="8" fill="#12a04a"/>
<rect x="743" y="45" width="5" height="6" fill="url(#g15)"/>
<path shape-rendering="geometricPrecision" d="M743.8,48.2 L745.2,50 L747.4,45.8" stroke="#fff" stroke-width="1.3" fill="none"/>
<path shape-rendering="geometricPrecision" d="M756.5,43.5 L760.3,36.5" stroke="#1c5cae" stroke-width="1.4" fill="none"/>
<path shape-rendering="geometricPrecision" d="M756.0,43.5 L763.5,43.5" stroke="#1c5cae" stroke-width="1.2" fill="none"/>
<path shape-rendering="geometricPrecision" d="M760.7,36.8 L764.1,43.0" stroke="#1c5cae" stroke-width="1.0" fill="none"/>
<path shape-rendering="geometricPrecision" d="M762.3000000000001,37.199999999999996 L765.7,43.0" stroke="#1c5cae" stroke-width="1.0" fill="none"/>
<path shape-rendering="geometricPrecision" d="M761.5,36.8 L764.9,43.0" stroke="#1c5cae" stroke-width="1.2" fill="none" stroke-dasharray="0.8 1.2" stroke-opacity="0.7"/>
<rect x="762" y="40" width="4" height="8" fill="#fff"/>
<path shape-rendering="geometricPrecision" d="M759.5,47.5 L763.3,40.5" stroke="#1c5cae" stroke-width="1.4" fill="none"/>
<path shape-rendering="geometricPrecision" d="M759.0,47.5 L766,47.5" stroke="#1c5cae" stroke-width="1.2" fill="none"/>
<path shape-rendering="geometricPrecision" d="M763.7,40.8 L766.6,46.5" stroke="#1c5cae" stroke-width="1.0" fill="none"/>
<path shape-rendering="geometricPrecision" d="M765.3000000000001,41.199999999999996 L768.2,46.5" stroke="#1c5cae" stroke-width="1.0" fill="none"/>
<path shape-rendering="geometricPrecision" d="M764.5,40.8 L767.4,46.5" stroke="#1c5cae" stroke-width="1.2" fill="none" stroke-dasharray="0.8 1.2" stroke-opacity="0.7"/>
<rect x="765" y="44" width="7" height="8" fill="#16357a"/>
<rect x="766" y="45" width="5" height="6" fill="#2f5aa0"/>
<rect x="767" y="46" width="1" height="1" fill="#e6eefa"/>
<rect x="770" y="46" width="1" height="1" fill="#e6eefa"/>
<rect x="768" y="47" width="1" height="1" fill="#e6eefa"/>
<rect x="769" y="47" width="1" height="1" fill="#e6eefa"/>
<rect x="768" y="48" width="1" height="1" fill="#e6eefa"/>
<rect x="769" y="48" width="1" height="1" fill="#e6eefa"/>
<rect x="767" y="49" width="1" height="1" fill="#e6eefa"/>
<rect x="770" y="49" width="1" height="1" fill="#e6eefa"/>
<path shape-rendering="geometricPrecision" d="M788.5,49.5 L793.3,40.5" stroke="#1c5cae" stroke-width="1.4" fill="none"/>
<path shape-rendering="geometricPrecision" d="M788,49.5 L795,49.5" stroke="#1c5cae" stroke-width="1.2" fill="none"/>
<path shape-rendering="geometricPrecision" d="M793.6,40.8 L795.6,45" stroke="#1c5cae" stroke-width="1.0" fill="none"/>
<path shape-rendering="geometricPrecision" d="M795.2,41.199999999999996 L797.2,45" stroke="#1c5cae" stroke-width="1.0" fill="none"/>
<path shape-rendering="geometricPrecision" d="M794.4,40.8 L796.4,45" stroke="#1c5cae" stroke-width="1.2" fill="none" stroke-dasharray="0.8 1.2" stroke-opacity="0.7"/>
<path shape-rendering="geometricPrecision" d="M796.3,37.5 L794.8,40.3" stroke="#1c5cae" stroke-width="1.4" fill="none"/>
<path shape-rendering="geometricPrecision" d="M796.6,37.8 L798.9,41.6" stroke="#1c5cae" stroke-width="1.0" fill="none"/>
<path shape-rendering="geometricPrecision" d="M798.2,38.199999999999996 L800.5,41.6" stroke="#1c5cae" stroke-width="1.0" fill="none"/>
<path shape-rendering="geometricPrecision" d="M797.4,37.8 L799.6999999999999,41.6" stroke="#1c5cae" stroke-width="1.2" fill="none" stroke-dasharray="0.8 1.2" stroke-opacity="0.7"/>
<rect x="795" y="41" width="7" height="6" fill="#fff" opacity="0.9"/>
<rect x="796" y="42" width="5" height="1" fill="#c4801c"/>
<rect x="796" y="43" width="1" height="1" fill="#c4801c"/>
<rect x="797" y="43" width="3" height="1" fill="#fffdf0"/>
<rect x="800" y="43" width="1" height="1" fill="#c4801c"/>
<rect x="796" y="44" width="1" height="1" fill="#c4801c"/>
<rect x="797" y="44" width="3" height="1" fill="#fffbe6"/>
<rect x="800" y="44" width="1" height="1" fill="#c4801c"/>
<rect x="796" y="45" width="1" height="1" fill="#c4801c"/>
<rect x="797" y="45" width="3" height="1" fill="#fff8dc"/>
<rect x="800" y="45" width="1" height="1" fill="#c4801c"/>
<rect x="794" y="46" width="3" height="1" fill="#c4801c"/>
<rect x="797" y="46" width="3" height="1" fill="#fff4cc"/>
<rect x="800" y="46" width="3" height="1" fill="#c4801c"/>
<rect x="794" y="47" width="1" height="1" fill="#c4801c"/>
<rect x="795" y="47" width="7" height="1" fill="#ffefb8"/>
<rect x="802" y="47" width="1" height="1" fill="#c4801c"/>
<rect x="795" y="48" width="1" height="1" fill="#c4801c"/>
<rect x="796" y="48" width="5" height="1" fill="#ffe9a4"/>
<rect x="801" y="48" width="1" height="1" fill="#c4801c"/>
<rect x="796" y="49" width="1" height="1" fill="#c4801c"/>
<rect x="797" y="49" width="3" height="1" fill="#ffe290"/>
<rect x="800" y="49" width="1" height="1" fill="#c4801c"/>
<rect x="797" y="50" width="1" height="1" fill="#c4801c"/>
<rect x="798" y="50" width="1" height="1" fill="#ffdc80"/>
<rect x="799" y="50" width="1" height="1" fill="#c4801c"/>
<rect x="798" y="51" width="1" height="1" fill="#c4801c"/>
<path shape-rendering="geometricPrecision" d="M820.4,38.6 L825.2,48" stroke="#1c5cae" stroke-width="1.0" fill="none"/>
<path shape-rendering="geometricPrecision" d="M822.0,39.0 L826.8000000000001,48" stroke="#1c5cae" stroke-width="1.0" fill="none"/>
<path shape-rendering="geometricPrecision" d="M821.1999999999999,38.6 L826.0,48" stroke="#1c5cae" stroke-width="1.2" fill="none" stroke-dasharray="0.8 1.2" stroke-opacity="0.7"/>
<path shape-rendering="geometricPrecision" d="M823,48.5 L826.5,48.5" stroke="#1c5cae" stroke-width="1.2" fill="none"/>
<path shape-rendering="geometricPrecision" d="M812,51.5 L823.5,51.5" stroke="#1c5cae" stroke-width="1.2" fill="none"/>
<path shape-rendering="geometricPrecision" d="M812.5,51.5 L814.6,47.8" stroke="#1c5cae" stroke-width="1.4" fill="none"/>
<path shape-rendering="geometricPrecision" d="M819.4,45 L822.4,51" stroke="#1c5cae" stroke-width="1.0" fill="none"/>
<path shape-rendering="geometricPrecision" d="M821.0,45.4 L824.0,51" stroke="#1c5cae" stroke-width="1.0" fill="none"/>
<path shape-rendering="geometricPrecision" d="M820.1999999999999,45 L823.1999999999999,51" stroke="#1c5cae" stroke-width="1.2" fill="none" stroke-dasharray="0.8 1.2" stroke-opacity="0.7"/>
<rect x="815" y="37" width="1" height="1" fill="#c4801c"/>
<rect x="814" y="38" width="1" height="1" fill="#c4801c"/>
<rect x="815" y="38" width="1" height="1" fill="#fffdf0"/>
<rect x="816" y="38" width="1" height="1" fill="#c4801c"/>
<rect x="813" y="39" width="1" height="1" fill="#c4801c"/>
<rect x="814" y="39" width="3" height="1" fill="#fffbe6"/>
<rect x="817" y="39" width="1" height="1" fill="#c4801c"/>
<rect x="812" y="40" width="1" height="1" fill="#c4801c"/>
<rect x="813" y="40" width="5" height="1" fill="#fff8dc"/>
<rect x="818" y="40" width="1" height="1" fill="#c4801c"/>
<rect x="811" y="41" width="1" height="1" fill="#c4801c"/>
<rect x="812" y="41" width="7" height="1" fill="#fff4cc"/>
<rect x="819" y="41" width="1" height="1" fill="#c4801c"/>
<rect x="811" y="42" width="3" height="1" fill="#c4801c"/>
<rect x="814" y="42" width="3" height="1" fill="#ffefb8"/>
<rect x="817" y="42" width="3" height="1" fill="#c4801c"/>
<rect x="813" y="43" width="1" height="1" fill="#c4801c"/>
<rect x="814" y="43" width="3" height="1" fill="#ffe9a4"/>
<rect x="817" y="43" width="1" height="1" fill="#c4801c"/>
<rect x="813" y="44" width="1" height="1" fill="#c4801c"/>
<rect x="814" y="44" width="3" height="1" fill="#ffe290"/>
<rect x="817" y="44" width="1" height="1" fill="#c4801c"/>
<rect x="813" y="45" width="1" height="1" fill="#c4801c"/>
<rect x="814" y="45" width="3" height="1" fill="#ffdc80"/>
<rect x="817" y="45" width="1" height="1" fill="#c4801c"/>
<rect x="813" y="46" width="5" height="1" fill="#c4801c"/>
<rect x="843" y="38" width="11" height="11" fill="#98a4c0"/>
<rect x="844" y="39" width="9" height="9" fill="#d6eefc"/>
<rect x="845" y="40" width="11" height="11" fill="#8490b0"/>
<rect x="846" y="41" width="9" height="9" fill="url(#g16)"/>
<rect x="847" y="45" width="7" height="1" fill="#1a4a80"/>
<rect x="850" y="42" width="1" height="7" fill="#1a4a80"/>
<rect x="866" y="38" width="11" height="11" fill="#98a4c0"/>
<rect x="867" y="39" width="9" height="9" fill="#d6eefc"/>
<rect x="868" y="40" width="11" height="11" fill="#8490b0"/>
<rect x="869" y="41" width="9" height="9" fill="url(#g17)"/>
<rect x="870" y="45" width="7" height="1" fill="#1a4a80"/>
<rect shape-rendering="geometricPrecision" x="898.5" y="37.5" width="3" height="3" rx="0.5" fill="#b4d2ec" stroke="#5580c0" stroke-width="1"/>
<rect shape-rendering="geometricPrecision" x="898.5" y="42.5" width="3" height="3" rx="0.5" fill="#b4d2ec" stroke="#5580c0" stroke-width="1"/>
<rect shape-rendering="geometricPrecision" x="898.5" y="47.5" width="3" height="3" rx="0.5" fill="#b4d2ec" stroke="#5580c0" stroke-width="1"/>
<rect shape-rendering="geometricPrecision" x="907.5" y="42.5" width="3" height="3" rx="0.5" fill="#ffeeb0" stroke="#c99a2e" stroke-width="1"/>
<rect x="903" y="40" width="1" height="1" fill="#4f76b8"/>
<rect x="904" y="41" width="1" height="1" fill="#4f76b8"/>
<rect x="905" y="42" width="1" height="1" fill="#4f76b8"/>
<rect x="905" y="45" width="1" height="1" fill="#4f76b8"/>
<rect x="904" y="46" width="1" height="1" fill="#4f76b8"/>
<rect x="903" y="47" width="1" height="1" fill="#4f76b8"/>
<polygon points="919,42 926,42 922.5,46" fill="#000"/>
<rect x="935" y="39" width="3" height="1" fill="#5a8fc4"/>
<rect x="938" y="39" width="3" height="1" fill="#566070"/>
<path shape-rendering="geometricPrecision" d="M938.6,37 L941.2,39.5 L938.6,42" stroke="#4e586c" stroke-width="1.1" fill="none"/>
<rect x="943" y="37" width="1" height="5" fill="#2a3c68"/>
<rect x="935" y="49" width="3" height="1" fill="#5a8fc4"/>
<rect x="938" y="49" width="3" height="1" fill="#566070"/>
<path shape-rendering="geometricPrecision" d="M938.6,47 L941.2,49.5 L938.6,52" stroke="#4e586c" stroke-width="1.1" fill="none"/>
<rect x="943" y="47" width="1" height="5" fill="#2a3c68"/>
<polygon shape-rendering="geometricPrecision" points="938.2,44.5 939.6,43.2 944.3,43.2 944.3,41.2 949.6,44.5 944.3,47.8 944.3,45.8 939.6,45.8" fill="#fff6d2" stroke="#c4821c" stroke-width="1.1"/>
<polygon points="957,42 964,42 960.5,46" fill="#000"/>
<path shape-rendering="geometricPrecision" d="M982 37.5 H990 L991.5 39 V47.5 Q991.5 48.5 990.5 48.5 H981.5 Q980.5 48.5 980.5 47.5 V39 Q980.5 37.5 982 37.5 Z" fill="#fbfbfb" stroke="#c4c4c4" stroke-width="1"/><path shape-rendering="geometricPrecision" d="M982.5 38 V41.5 H989.5 V38" fill="#e9e9e9" stroke="#c8c8c8" stroke-width="0.9"/><path shape-rendering="geometricPrecision" d="M983.5 48 V44.5 H988.5 V48" fill="#fff" stroke="#c8c8c8" stroke-width="0.9"/><rect x="986" y="45.5" width="1.5" height="2" fill="#d0d0d0"/>
<rect x="987" y="50" width="2" height="2" fill="#b4b4b4"/>
<rect x="990" y="50" width="2" height="2" fill="#b4b4b4"/>
<rect x="993" y="50" width="2" height="2" fill="#b4b4b4"/>
</svg>
</body></html>
